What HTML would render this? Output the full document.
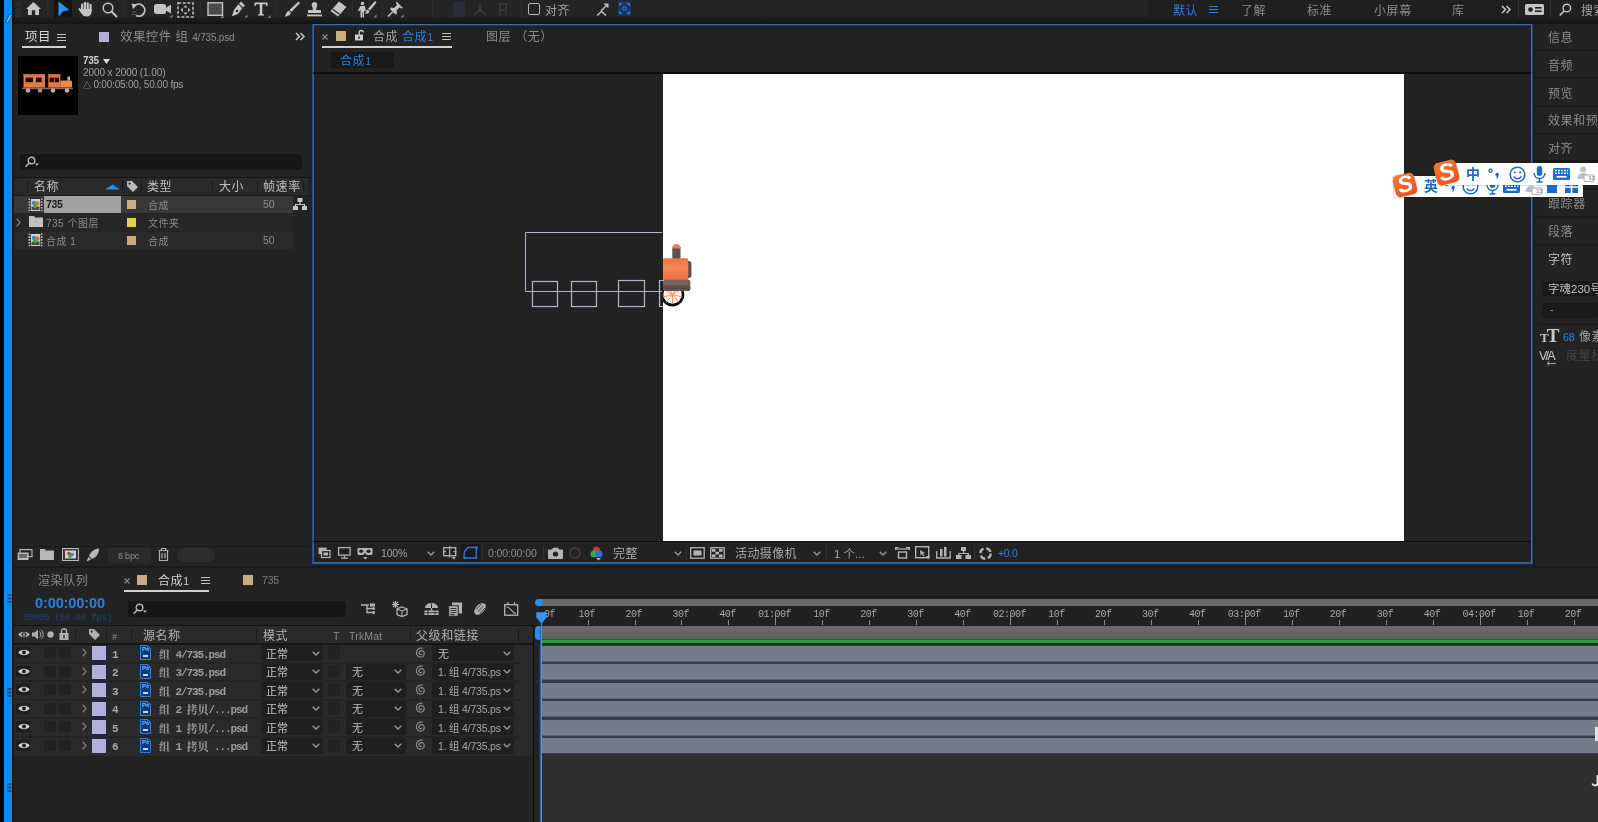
<!DOCTYPE html>
<html lang="zh-CN">
<head>
<meta charset="utf-8">
<title>After Effects</title>
<style>
*{box-sizing:border-box;margin:0;padding:0}
html,body{width:1598px;height:822px;overflow:hidden;background:#232323}
body{position:relative;font-family:"Liberation Sans","Noto Sans CJK SC",sans-serif;font-size:12px;color:#a0a0a0}
.a{position:absolute}
.t{position:absolute;white-space:nowrap;line-height:14px;height:14px}
.c{letter-spacing:.6px;margin-top:1px}
.s{font-size:10px}
.ser{font-family:"Liberation Serif","Noto Serif CJK SC",serif;font-weight:bold}
svg{position:absolute;overflow:visible}
.mono{font-family:"Liberation Mono","Noto Serif CJK SC",monospace;font-weight:bold;font-size:11px}
.ml{letter-spacing:-1.100px}
.mc{position:relative;top:.500px}
</style>
</head>
<body>
<div id="root" style="position:absolute;left:0;top:0;width:1598px;height:822px;will-change:transform">
<div class="a" style="left:0px;top:0px;width:4px;height:822px;background:#030303;"></div>
<div class="a" style="left:4px;top:0px;width:8px;height:822px;background:#0a8cf0;"></div>
<div class="a" style="left:12px;top:0px;width:2px;height:822px;background:#1a1a1a;"></div>
<svg style="left:5px;top:14px" width="7" height="9" viewBox="0 0 7 9"><path d="M5.500 1.500L2.500 7.500" stroke="#0a5aa8" stroke-width="3.500" stroke-linecap="round"/><path d="M5.500 1.500L2.500 7.500" stroke="#8ccaf8" stroke-width="1.600" stroke-linecap="round"/></svg>
<div class="a" style="left:14px;top:0px;width:1584px;height:17px;background:#242424;"></div>
<div class="a" style="left:14px;top:17px;width:1584px;height:7px;background:linear-gradient(#202020,#131313);"></div>
<div class="a" style="left:16px;top:2px;width:5px;height:1px;background:#303030;"></div>
<div class="a" style="left:16px;top:4px;width:5px;height:1px;background:#303030;"></div>
<div class="a" style="left:16px;top:6px;width:5px;height:1px;background:#303030;"></div>
<div class="a" style="left:16px;top:8px;width:5px;height:1px;background:#303030;"></div>
<div class="a" style="left:16px;top:10px;width:5px;height:1px;background:#303030;"></div>
<div class="a" style="left:16px;top:12px;width:5px;height:1px;background:#303030;"></div>
<div class="a" style="left:16px;top:14px;width:5px;height:1px;background:#303030;"></div>
<div class="a" style="left:16px;top:16px;width:5px;height:1px;background:#303030;"></div>
<svg style="left:26px;top:2px" width="15" height="13" viewBox="0 0 15 13"><path d="M7.5 0L0 7h2v6h3.8V8.2h3.4V13H13V7h2z" fill="#c4c4c4"/></svg>
<div class="a" style="left:47px;top:1px;width:1px;height:17px;background:#2e2e2e;"></div>
<div class="a" style="left:54px;top:0px;width:18px;height:18px;background:#141414;"></div>
<svg style="left:58px;top:1px" width="12" height="17" viewBox="0 0 12 17"><path d="M0.5 0.5L11.5 9L5.2 10.2L0.5 16z" fill="#3090f0"/></svg>
<svg style="left:78px;top:1px" width="16" height="16" viewBox="0 0 16 16"><rect x="3" y="2.500" width="2.200" height="8" rx="1.100" fill="#c4c4c4"/><rect x="5.800" y="0.800" width="2.200" height="9" rx="1.100" fill="#c4c4c4"/><rect x="8.600" y="1.200" width="2.200" height="9" rx="1.100" fill="#c4c4c4"/><rect x="11.400" y="2.800" width="2.200" height="8" rx="1.100" fill="#c4c4c4"/><path d="M3 8h10.600v2.500c0 3.200-2 5-5 5-2.200 0-3.700-.8-4.800-2.500L0.600 8.600a1.100 1.100 0 0 1 1.800-1.200L3 8.500z" fill="#c4c4c4"/></svg>
<svg style="left:102px;top:2px" width="16" height="15" viewBox="0 0 16 15"><circle cx="6" cy="6" r="4.8" fill="none" stroke="#c4c4c4" stroke-width="1.5"/><path d="M9.5 9.500L15 15" stroke="#c4c4c4" stroke-width="2"/></svg>
<div class="a" style="left:124px;top:1px;width:1px;height:17px;background:#2e2e2e;"></div>
<svg style="left:131px;top:2px" width="17" height="15" viewBox="0 0 17 15"><path d="M4 3.500A6 6 0 1 1 5 13.500" fill="none" stroke="#c4c4c4" stroke-width="1.800"/><path d="M0.5 1.500L6.500 2.500L2 7z" fill="#c4c4c4"/><path d="M1 10h4M0.5 12.500h5" stroke="#555" stroke-width="1"/></svg>
<svg style="left:154px;top:3px" width="19" height="15" viewBox="0 0 19 15"><rect x="0" y="1" width="12" height="10" rx="2.500" fill="#c4c4c4"/><path d="M11 5.500L17 1.500V10.500L11 7z" fill="#c4c4c4"/><path d="M15.500 14.500h3v-3z" fill="#888"/></svg>
<svg style="left:177px;top:2px" width="17" height="16" viewBox="0 0 17 16"><rect x="1" y="1" width="15" height="14" fill="none" stroke="#c4c4c4" stroke-width="1.500" stroke-dasharray="3 1.700"/><path d="M8.500 3.200l2 2.300h-4zM8.500 12.800l2-2.300h-4zM3.500 8l2.300-2v4zM13.500 8l-2.300-2v4z" fill="#c4c4c4"/></svg>
<div class="a" style="left:200px;top:1px;width:1px;height:17px;background:#2e2e2e;"></div>
<svg style="left:207px;top:2px" width="17" height="16" viewBox="0 0 17 16"><rect x="1" y="0.800" width="14.500" height="12.500" fill="#4a4a4a" stroke="#c4c4c4" stroke-width="1.400"/><path d="M13.500 16h3v-3z" fill="#888"/></svg>
<svg style="left:231px;top:1px" width="17" height="17" viewBox="0 0 17 17"><path d="M10 0.500l4 4-2 2-4-4zM7.300 3.300l3.900 3.900L7 13 0.800 15.200 3 9z" fill="#c4c4c4"/><circle cx="6" cy="10" r="1.200" fill="#242424"/><path d="M13.500 16.500h3v-3z" fill="#888"/></svg>
<svg style="left:254px;top:2px" width="17" height="16" viewBox="0 0 17 16"><path d="M0.500 0.500h13v3.500h-1.200l-.5-1.800H8.300V12l1.800.5V13.500H3.900V12.500L5.700 12V2.200H2.200L1.700 4H0.500z" fill="#c4c4c4"/><path d="M13.500 16h3v-3z" fill="#888"/></svg>
<div class="a" style="left:276px;top:1px;width:1px;height:17px;background:#2e2e2e;"></div>
<svg style="left:284px;top:1px" width="16" height="17" viewBox="0 0 16 17"><path d="M14.500 0.500L16 2 7.500 11 5.500 9z" fill="#c4c4c4"/><path d="M4.800 9.800l2 2c-.5 2.500-3 3.700-6.300 3.700 1.800-1.200 1.300-4.700 4.300-5.700z" fill="#c4c4c4"/></svg>
<svg style="left:306px;top:2px" width="17" height="15" viewBox="0 0 17 15"><path d="M8.500 0a2.800 2.800 0 0 1 2.300 4.500L10 8h5v3H2V8h5L6.200 4.500A2.800 2.800 0 0 1 8.500 0z" fill="#c4c4c4"/><rect x="1" y="12.500" width="15" height="1.800" fill="#c4c4c4"/></svg>
<svg style="left:330px;top:1px" width="17" height="16" viewBox="0 0 17 16"><path d="M9 0.500L16.500 6 8 15.500 0.500 10z" fill="#c4c4c4"/><path d="M2.800 8.300L9.500 13.300" stroke="#242424" stroke-width="1.300"/></svg>
<div class="a" style="left:352px;top:1px;width:1px;height:17px;background:#2e2e2e;"></div>
<svg style="left:358px;top:1px" width="19" height="17" viewBox="0 0 19 17"><circle cx="4.500" cy="2.500" r="1.800" fill="#c4c4c4"/><path d="M2.500 5h4.500l1 5-1.500.5-.5-2v8H4.500V11H4v5.500H2.500V8.500L1 10.500 0 9.500z" fill="#c4c4c4"/><path d="M17 0l1.500 1.500L12 9.500 10 7.800z" fill="#c4c4c4"/><path d="M9.500 8.500l2 1.800c-.7 2-2.500 2.700-4.500 2.500 1-1 1-3.300 2.500-4.300z" fill="#c4c4c4"/><path d="M15.500 16.500h3v-3z" fill="#888"/></svg>
<div class="a" style="left:382px;top:1px;width:1px;height:17px;background:#2e2e2e;"></div>
<svg style="left:387px;top:1px" width="17" height="17" viewBox="0 0 17 17"><path d="M9.500 0.500L16 7l-1.500.5-2-1L9.500 9.500l.5 3-1.500 1L3 8l1-1.500 3 .5 3-3-1-2z" fill="#c4c4c4"/><path d="M5.500 11L1 15.500" stroke="#c4c4c4" stroke-width="1.600"/><path d="M13.500 16.500h3v-3z" fill="#888"/></svg>
<div class="a" style="left:432px;top:1px;width:1px;height:17px;background:#2e2e2e;"></div>
<svg style="left:452px;top:2px" width="14" height="15" viewBox="0 0 14 15"><rect x="1" y="0" width="12" height="15" fill="#2a2e3a"/></svg>
<svg style="left:473px;top:3px" width="14" height="13" viewBox="0 0 14 13"><path d="M7 0v7M7 7L1 12M7 7l6 5" stroke="#3c3c3c" stroke-width="1.500" fill="none"/></svg>
<svg style="left:497px;top:2px" width="12" height="15" viewBox="0 0 12 15"><path d="M1 2h10M3 2v12M9 2v12M3 8h6" stroke="#3a3a3a" stroke-width="1.500" fill="none"/></svg>
<div class="a" style="left:521px;top:1px;width:1px;height:17px;background:#303030;"></div>
<div class="a" style="left:528px;top:3px;width:12px;height:12px;border:1.500px solid #b4b4b4;border-radius:2px"></div>
<div class="t c" style="left:545px;top:3px;color:#a0a0a0;font-size:12px">对齐</div>
<svg style="left:596px;top:3px" width="13" height="13" viewBox="0 0 13 13"><path d="M11.500 1.500L5 8" stroke="#c4c4c4" stroke-width="1.400"/><path d="M7.500 0.500h5v5z" fill="#c4c4c4"/><path d="M1 12.500L5.500 8.500 10 12.500" fill="none" stroke="#c4c4c4" stroke-width="1.500"/></svg>
<svg style="left:618px;top:1px" width="13" height="15" viewBox="0 0 13 15"><rect x="0" y="0" width="13" height="15" fill="#16345e"/><path d="M1.700 5V2.700H4M9 2.700h2.300V5M11.300 10v2.300H9M4 12.300H1.700V10" fill="none" stroke="#3a78c8" stroke-width="1.400"/><rect x="5" y="6" width="3" height="3" fill="none" stroke="#3a78c8" stroke-width="1"/></svg>
<div class="a" style="left:1148px;top:0px;width:450px;height:17px;background:#1f1f1f;"></div>
<div class="t c" style="left:1173px;top:3px;color:#2d80dc;font-size:12px">默认</div>
<svg style="left:1209px;top:6px" width="9" height="8" viewBox="0 0 9 8"><path d="M0 0.500H9M0 3.500H9M0 6.500H9" stroke="#2d80dc" stroke-width="1" shape-rendering="crispEdges"/></svg>
<div class="t c" style="left:1241px;top:3px;color:#8c8c8c;font-size:12px">了解</div>
<div class="t c" style="left:1307px;top:3px;color:#8c8c8c;font-size:12px">标准</div>
<div class="t c" style="left:1374px;top:3px;color:#8c8c8c;font-size:12px">小屏幕</div>
<div class="t c" style="left:1452px;top:3px;color:#8c8c8c;font-size:12px">库</div>
<svg style="left:1501px;top:5px" width="10" height="9" viewBox="0 0 10 9"><path d="M1 1L4.500 4.500L1 8M5.500 1L9 4.500L5.500 8" fill="none" stroke="#c8c8c8" stroke-width="1.500"/></svg>
<div class="a" style="left:1518px;top:1px;width:1px;height:17px;background:#303030;"></div>
<svg style="left:1525px;top:4px" width="19" height="11" viewBox="0 0 19 11"><rect x="0" y="0" width="19" height="11" rx="1.500" fill="#c4c4c4"/><circle cx="5.500" cy="5.500" r="2.300" fill="#1f1f1f"/><rect x="10" y="3" width="6.500" height="1.600" fill="#1f1f1f"/><rect x="10" y="6.400" width="6.500" height="1.600" fill="#1f1f1f"/></svg>
<div class="a" style="left:1550px;top:1px;width:1px;height:17px;background:#303030;"></div>
<svg style="left:1559px;top:3px" width="13" height="13" viewBox="0 0 13 13"><circle cx="7.800" cy="5" r="3.800" fill="none" stroke="#c4c4c4" stroke-width="1.400"/><path d="M5 8L0.800 12.300" stroke="#c4c4c4" stroke-width="1.700"/></svg>
<div class="t c" style="left:1581px;top:3px;color:#a0a0a0;font-size:12px">搜索</div>
<div class="a" style="left:14px;top:24px;width:297px;height:542px;background:#232323;"></div>
<div class="t c" style="left:25px;top:29px;color:#d4d4d4;font-size:12.5px">项目</div>
<svg style="left:57px;top:34px" width="9" height="8" viewBox="0 0 9 8"><path d="M0 0.500H9M0 3.500H9M0 6.500H9" stroke="#c0c0c0" stroke-width="1" shape-rendering="crispEdges"/></svg>
<div class="a" style="left:22px;top:46px;width:44px;height:2px;background:#d0d0d0;"></div>
<div class="a" style="left:99px;top:32px;width:10px;height:10px;background:#b4b0d8;"></div>
<div class="t c" style="left:120px;top:29px;color:#8c8c8c;font-size:12.5px;letter-spacing:.4px">效果控件 组 <span style="font-size:10px;letter-spacing:-.2px">4/735.psd</span></div>
<svg style="left:295px;top:32px" width="10" height="9" viewBox="0 0 10 9"><path d="M1 1L4.5 4.5L1 8M5.5 1L9 4.5L5.5 8" fill="none" stroke="#c8c8c8" stroke-width="1.5"/></svg>
<div class="a" style="left:18px;top:56px;width:60px;height:59px;background:#000000;"></div>
<svg style="left:18px;top:56px" width="60" height="60" viewBox="0 0 60 60">
<rect x="5.500" y="18" width="21.500" height="13.600" fill="#e87a40"/><rect x="5.500" y="18" width="21.500" height="1.500" fill="#c86838"/><rect x="7.600" y="21.600" width="7.400" height="4.600" fill="#1c0c06"/><rect x="17.900" y="21.600" width="5.800" height="4.600" fill="#1c0c06"/>
<rect x="30.300" y="18" width="12" height="13.600" fill="#e87a40"/><rect x="30.300" y="18" width="12" height="1.500" fill="#c86838"/><rect x="31.600" y="21.600" width="9.400" height="4.600" fill="#1c0c06"/><rect x="36" y="21.600" width="1" height="4.600" fill="#a85830"/>
<rect x="42.300" y="24.500" width="11.700" height="7.100" rx="1" fill="#f08a50"/><rect x="49.500" y="20.500" width="2.500" height="4" fill="#d8a890"/>
<rect x="4" y="31.600" width="51" height="1.600" fill="#8a6a5a"/>
<circle cx="10" cy="34.500" r="2.300" fill="#c8a8a0"/><circle cx="22" cy="34.500" r="2.300" fill="#a88880"/><circle cx="35" cy="34.500" r="2.300" fill="#c8a8a0"/><circle cx="49" cy="34.500" r="2.300" fill="#c8a8a0"/>
</svg>
<div class="t s" style="left:83px;top:54px;color:#d0d0d0;font-weight:bold;letter-spacing:-.3px">735</div>
<svg style="left:103px;top:59px" width="7" height="5" viewBox="0 0 7 5"><path d="M0 0H7L3.5 5Z" fill="#e0e0e0"/></svg>
<div class="t s" style="left:83px;top:66px;color:#a0a0a0;letter-spacing:-.08px">2000 x 2000 (1.00)</div>
<div class="t s" style="left:83px;top:78px;color:#a0a0a0;letter-spacing:-.2px"><span style="font-size:8px">△</span> 0:00:05:00, 50.00 fps</div>
<div class="a" style="left:20px;top:154px;width:282px;height:16px;background:#161616;border-radius:3px"></div>
<svg style="left:24px;top:156px" width="16" height="12" viewBox="0 0 16 12"><circle cx="7.5" cy="4.5" r="3.3" fill="none" stroke="#b8b8b8" stroke-width="1.4"/><path d="M5 7.2L1.5 10.8" stroke="#b8b8b8" stroke-width="1.6"/><path d="M11 7.5h4l-2 2.3z" fill="#b8b8b8"/></svg>
<div class="a" style="left:14px;top:177px;width:297px;height:1px;background:#161616;"></div>
<div class="a" style="left:14px;top:178px;width:294px;height:17px;background:#2a2a2a;"></div>
<div class="a" style="left:14px;top:195px;width:297px;height:1px;background:#1a1a1a;"></div>
<div class="t c" style="left:34px;top:179px;color:#c0c0c0;font-size:12px">名称</div>
<svg style="left:105px;top:184px" width="15" height="6" viewBox="0 0 15 6"><path d="M0 5.500L7.500 0.500L15 5.500Z" fill="#2d8ceb"/></svg>
<svg style="left:126px;top:180px" width="13" height="13" viewBox="0 0 13 13"><path d="M1 1h5l6 6-5 5-6-6z" fill="#b8b8b8"/><circle cx="3.6" cy="3.6" r="1.1" fill="#2a2a2a"/></svg>
<div class="t c" style="left:147px;top:179px;color:#c0c0c0;font-size:12px">类型</div>
<div class="t c" style="left:219px;top:179px;color:#c0c0c0;font-size:12px">大小</div>
<div class="t c" style="left:263px;top:179px;color:#c0c0c0;font-size:12px">帧速率</div>
<div class="a" style="left:27px;top:181px;width:1px;height:12px;background:#1a1a1a;"></div>
<div class="a" style="left:122px;top:181px;width:1px;height:12px;background:#1a1a1a;"></div>
<div class="a" style="left:141px;top:181px;width:1px;height:12px;background:#1a1a1a;"></div>
<div class="a" style="left:212px;top:181px;width:1px;height:12px;background:#1a1a1a;"></div>
<div class="a" style="left:257px;top:181px;width:1px;height:12px;background:#1a1a1a;"></div>
<div class="a" style="left:303px;top:181px;width:1px;height:12px;background:#1a1a1a;"></div>
<div class="a" style="left:14px;top:196px;width:279px;height:17px;background:#383838;"></div>
<svg style="left:28px;top:198px" width="15" height="14" viewBox="0 0 15 14"><rect x="0" y="0" width="15" height="14" fill="#2a2a2a"/><path d="M1.200 0.500v13M13.800 0.500v13" stroke="#e0e0e0" stroke-width="1.200" stroke-dasharray="1.600 1.200"/><rect x="2.800" y="1" width="9.400" height="12" fill="#d4d4d4"/><rect x="3.500" y="8.500" width="8" height="3.500" fill="#4a4a4a"/><circle cx="6" cy="5" r="2.200" fill="#3a88c0"/><circle cx="9.300" cy="5.500" r="2.300" fill="#e07040"/><circle cx="7" cy="8" r="2" fill="#58a050"/></svg>
<div class="a" style="left:44px;top:196px;width:77px;height:17px;background:#a2a2a2;"></div>
<div class="t s" style="left:46px;top:197px;color:#1a1a1a;font-weight:bold;letter-spacing:-.3px;font-size:10.5px">735</div>
<div class="a" style="left:127px;top:200px;width:9px;height:9px;background:#c8ac80;"></div>
<div class="t c" style="left:148px;top:198px;color:#8c8c8c;font-size:10px;letter-spacing:.5px">合成</div>
<div class="t s" style="left:263px;top:197px;color:#8c8c8c;font-size:10.5px">50</div>
<svg style="left:293px;top:198px" width="14" height="12" viewBox="0 0 14 12"><rect x="4.5" y="0" width="5" height="4" fill="#c8c8c8"/><rect x="0" y="8" width="5" height="4" fill="#c8c8c8"/><rect x="9" y="8" width="5" height="4" fill="#c8c8c8"/><path d="M7 4v2.5M2.5 8V6.5h9V8" fill="none" stroke="#c8c8c8" stroke-width="1.2"/></svg>
<div class="a" style="left:14px;top:214px;width:279px;height:17px;background:#262626;"></div>
<svg style="left:16px;top:218px" width="5" height="9" viewBox="0 0 5 9"><path d="M0.7 0.7 L4 4.5 L0.7 8.3" fill="none" stroke="#7a7a7a" stroke-width="1.3"/></svg>
<svg style="left:29px;top:216px" width="14" height="11" viewBox="0 0 14 11"><path d="M0 0h5l1 1.5h8V11H0z" fill="#c0c0c0"/></svg>
<div class="t c" style="left:46px;top:216px;color:#8c8c8c;font-size:10px;letter-spacing:.5px">735 个图层</div>
<div class="a" style="left:127px;top:218px;width:9px;height:9px;background:#e8d040;"></div>
<div class="t c" style="left:148px;top:216px;color:#8c8c8c;font-size:10px;letter-spacing:.5px">文件夹</div>
<div class="a" style="left:14px;top:232px;width:279px;height:17px;background:#2a2a2a;"></div>
<svg style="left:28px;top:233px" width="15" height="14" viewBox="0 0 15 14"><rect x="0" y="0" width="15" height="14" fill="#2a2a2a"/><path d="M1.200 0.500v13M13.800 0.500v13" stroke="#e0e0e0" stroke-width="1.200" stroke-dasharray="1.600 1.200"/><rect x="2.800" y="1" width="9.400" height="12" fill="#d4d4d4"/><rect x="3.500" y="8.500" width="8" height="3.500" fill="#4a4a4a"/><circle cx="6" cy="5" r="2.200" fill="#3a88c0"/><circle cx="9.300" cy="5.500" r="2.300" fill="#e07040"/><circle cx="7" cy="8" r="2" fill="#58a050"/></svg>
<div class="t c" style="left:46px;top:234px;color:#8c8c8c;font-size:10px;letter-spacing:.5px">合成 1</div>
<div class="a" style="left:127px;top:236px;width:9px;height:9px;background:#c8ac80;"></div>
<div class="t c" style="left:148px;top:234px;color:#8c8c8c;font-size:10px;letter-spacing:.5px">合成</div>
<div class="t s" style="left:263px;top:233px;color:#8c8c8c;font-size:10.5px">50</div>
<div class="a" style="left:14px;top:546px;width:297px;height:1px;background:#1a1a1a;"></div>
<svg style="left:17px;top:549px" width="16" height="12" viewBox="0 0 16 12"><rect x="3" y="0.6" width="12" height="7" fill="none" stroke="#b8b8b8" stroke-width="1.2"/><rect x="0.6" y="3.5" width="11" height="7.5" fill="#b8b8b8"/><path d="M2 6h8M2 8h8" stroke="#232323" stroke-width="1"/></svg>
<svg style="left:40px;top:549px" width="14" height="11" viewBox="0 0 14 11"><path d="M0 0h5l1 1.5h8V11H0z" fill="#b8b8b8"/></svg>
<svg style="left:62px;top:548px" width="17" height="13" viewBox="0 0 17 13"><rect x="0.5" y="0.5" width="16" height="12" fill="#3a3a3a" stroke="#b8b8b8"/><rect x="3" y="2.5" width="11" height="8" fill="#d0d0d0"/><circle cx="7" cy="5.5" r="1.8" fill="#c04030"/><circle cx="10" cy="6.5" r="1.8" fill="#3a78c8"/><circle cx="8" cy="8.5" r="1.8" fill="#58a848"/></svg>
<svg style="left:86px;top:548px" width="14" height="14" viewBox="0 0 14 14"><path d="M13 0.5C8 1 4.5 4 3 8l3 3c4-1.5 7-5 7-10.5zM2.5 9L0.5 13.5 5 11.5z" fill="#b8b8b8"/></svg>
<div class="a" style="left:108px;top:548px;width:43px;height:15px;background:#2b2b2b;border-radius:2px"></div>
<div class="t s" style="left:118px;top:549px;color:#8c8c8c;font-size:9px;letter-spacing:-.2px">8 bpc</div>
<svg style="left:158px;top:548px" width="11" height="13" viewBox="0 0 11 13"><path d="M0.5 2.5h10M3.5 2.5v-2h4v2M1.5 2.5v10h8v-10M4 5v5.5M7 5v5.5" fill="none" stroke="#b0b0b0" stroke-width="1.2"/></svg>
<div class="a" style="left:177px;top:548px;width:38px;height:14px;background:#2e2e2e;border-radius:7px"></div>
<div class="a" style="left:311px;top:24px;width:1222px;height:541px;background:#14263c"></div>
<div class="a" style="left:312px;top:24px;width:1221px;height:540px;background:#222222;border:2px solid #325f96"></div>
<div class="a" style="left:312px;top:24px;width:1221px;height:1px;background:#3a6ea6;"></div>
<div class="a" style="left:314px;top:25px;width:1217px;height:1px;background:#1c3654;"></div>
<div class="a" style="left:312px;top:24px;width:1px;height:540px;background:#2a4f7c;"></div>
<div class="a" style="left:1531px;top:25px;width:1px;height:538px;background:#4576b0;"></div>
<div class="a" style="left:1532px;top:24px;width:1px;height:540px;background:#22426a;"></div>
<svg style="left:322px;top:34px" width="6" height="6" viewBox="0 0 6 6"><path d="M0.500 0.500L5.500 5.500M5.500 0.500L0.500 5.500" stroke="#8a8a8a" stroke-width="1.100"/></svg>
<div class="a" style="left:336px;top:31px;width:10px;height:10px;background:#c8ac80;"></div>
<svg style="left:355px;top:30px" width="9" height="11" viewBox="0 0 9 11"><rect x="0" y="4.500" width="8" height="6" fill="#d0d0d0"/><path d="M4.300 4.500V2.500a2 2 0 0 1 4 0" fill="none" stroke="#d0d0d0" stroke-width="1.300"/><rect x="3.300" y="6.500" width="1.500" height="2.200" fill="#222"/></svg>
<div class="t c" style="left:373px;top:29px;color:#a8a8a8;font-size:12px">合成</div>
<div class="t c" style="left:402px;top:29px;color:#2d80dc;font-size:12px">合成<span style="font-size:10.500px;letter-spacing:0">1</span></div>
<svg style="left:442px;top:33px" width="9" height="8" viewBox="0 0 9 8"><path d="M0 0.500H9M0 3.500H9M0 6.500H9" stroke="#c0c0c0" stroke-width="1" shape-rendering="crispEdges"/></svg>
<div class="a" style="left:322px;top:46px;width:130px;height:2px;background:#d0d0d0;"></div>
<div class="t c" style="left:486px;top:29px;color:#8c8c8c;font-size:12px">图层 （无）</div>
<div class="a" style="left:331px;top:52px;width:63px;height:16px;background:#181818;border-radius:2px"></div>
<div class="t c" style="left:340px;top:53px;color:#2d80dc;font-size:12px">合成<span style="font-size:10.500px;letter-spacing:0">1</span></div>
<div class="a" style="left:313px;top:72px;width:1218px;height:2px;background:#0c0c0c;"></div>
<div class="a" style="left:313px;top:541px;width:1218px;height:1px;background:#0c0c0c;"></div>
<div class="a" style="left:663px;top:74px;width:741px;height:467px;background:#ffffff;"></div>
<svg style="left:520px;top:225px" width="180" height="90" viewBox="520 225 180 90">
<path d="M662 232.500H525.500V291.500H662" fill="none" stroke="#b4b4cc" stroke-width="1"/>
<rect x="532.500" y="281.500" width="25" height="25" fill="none" stroke="#b4b4cc" stroke-width="1.200"/>
<rect x="571.500" y="281.500" width="25" height="25" fill="none" stroke="#b4b4cc" stroke-width="1.200"/>
<rect x="618.500" y="280.500" width="26" height="26" fill="none" stroke="#b4b4cc" stroke-width="1.200"/>
<path d="M663 280.500H659.500V306.500H663" fill="none" stroke="#b4b4cc" stroke-width="1.200"/>
<defs><linearGradient id="tg" x1="0" y1="0" x2="0" y2="1"><stop offset="0" stop-color="#ee7040"/><stop offset="0.450" stop-color="#f58a5a"/><stop offset="1" stop-color="#ea6a3a"/></linearGradient></defs>
<clipPath id="cv"><rect x="663" y="74" width="741" height="467"/></clipPath>
<g clip-path="url(#cv)">
<circle cx="672.500" cy="294.600" r="10.500" fill="#fff4ee" stroke="#0a0a0a" stroke-width="2.600"/>
<path d="M672.500 294.600L662.500 297M672.500 294.600L663.500 289M672.500 294.600L667.500 285.500M672.500 294.600L672.500 304M672.500 294.600L677.500 285.500M672.500 294.600L681.500 289M672.500 294.600L682.500 297M672.500 294.600L666 302.500M672.500 294.600L679 302.500" stroke="#f29068" stroke-width="1"/>
<rect x="672.300" y="247" width="8.200" height="12" fill="#5e5048"/>
<path d="M672.300 248.500a4.100 4.500 0 0 1 8.200 0z" fill="#f27c52"/>
<rect x="686" y="261" width="5.400" height="17" rx="2.700" fill="#5e4a42"/>
<rect x="663" y="258.200" width="25.300" height="22" rx="1.500" fill="url(#tg)"/>
<rect x="663" y="279.800" width="27.300" height="11" rx="2" fill="#76605a"/>
<rect x="663" y="285.500" width="27.300" height="5.300" rx="2" fill="#5c4c44"/>
</g>
</svg>
<svg style="left:318px;top:547px" width="13" height="12" viewBox="0 0 13 12"><rect x="0.600" y="0.600" width="8" height="6.500" fill="#b4b4b4"/><rect x="3.500" y="3.500" width="8.500" height="7" fill="#222" stroke="#b4b4b4" stroke-width="1.200"/><rect x="5.500" y="5.500" width="4.500" height="3" fill="#b4b4b4"/></svg>
<svg style="left:338px;top:547px" width="13" height="12" viewBox="0 0 13 12"><rect x="0.600" y="0.600" width="11.500" height="7.500" fill="none" stroke="#b4b4b4" stroke-width="1.300"/><path d="M6.500 8.500v2.500M3 11.200h7" stroke="#b4b4b4" stroke-width="1.300"/></svg>
<svg style="left:357px;top:547px" width="16" height="13" viewBox="0 0 16 13"><path d="M1 1h13.500a1 1 0 0 1 1 1v4.500a1.500 1.500 0 0 1-1.500 1.500H10L8 6 6 8H2A1.500 1.500 0 0 1 0.500 6.500V2a1 1 0 0 1 .5-1z" fill="#b4b4b4"/><ellipse cx="4.200" cy="4.300" rx="2" ry="1.700" fill="#222"/><ellipse cx="11.500" cy="4.300" rx="2" ry="1.700" fill="#222"/><path d="M6 10h4.500l-2.200 2.500z" fill="#b4b4b4"/></svg>
<div class="t s" style="left:381px;top:546px;color:#a0a0a0;font-size:10.500px;letter-spacing:-.2px">100%</div>
<svg style="left:427px;top:551px" width="8" height="5" viewBox="0 0 8 5"><path d="M0.7 0.7 L4 4 L7.3 0.7" fill="none" stroke="#9a9a9a" stroke-width="1.3"/></svg>
<svg style="left:443px;top:546px" width="14" height="14" viewBox="0 0 14 14"><rect x="0.700" y="1.700" width="12" height="8" fill="none" stroke="#b4b4b4" stroke-width="1.300"/><path d="M6.700 0v11.500M0 5.700h3M10.500 5.700h3" stroke="#b4b4b4" stroke-width="1.200"/><path d="M8.500 11h4.500l-2.200 2.500z" fill="#b4b4b4"/></svg>
<div class="a" style="left:461px;top:544px;width:19px;height:17px;background:#1a1a1a;"></div>
<svg style="left:463px;top:546px" width="15" height="14" viewBox="0 0 15 14"><path d="M1.500 5.500L5 1.500H13.500L13 12H1z" fill="none" stroke="#2a78d8" stroke-width="1.400"/><circle cx="1.500" cy="12" r="1.300" fill="#2a78d8"/><circle cx="13" cy="12" r="1.300" fill="#2a78d8"/><circle cx="13.500" cy="1.500" r="1.300" fill="#2a78d8"/></svg>
<div class="a" style="left:482px;top:545px;width:1px;height:15px;background:#303030;"></div>
<div class="t s" style="left:488px;top:546px;color:#8c8c8c;font-size:10.500px;letter-spacing:-.1px">0:00:00:00</div>
<div class="a" style="left:543px;top:545px;width:1px;height:15px;background:#303030;"></div>
<svg style="left:548px;top:547px" width="15" height="12" viewBox="0 0 15 12"><path d="M1 2.500h3l1-1.800h5l1 1.800h3a1 1 0 0 1 1 1V11a1 1 0 0 1-1 1H1a1 1 0 0 1-1-1V3.500a1 1 0 0 1 1-1z" fill="#b4b4b4"/><circle cx="7.500" cy="7" r="2.600" fill="#222"/></svg>
<svg style="left:568px;top:547px" width="14" height="12" viewBox="0 0 14 12"><circle cx="7" cy="6" r="5" fill="none" stroke="#3a3a3a" stroke-width="2"/></svg>
<svg style="left:590px;top:546px" width="13" height="15" viewBox="0 0 13 15"><circle cx="6.500" cy="4" r="3.500" fill="#d03838"/><circle cx="4" cy="8" r="3.500" fill="#38a848"/><circle cx="9" cy="8" r="3.500" fill="#3868d8"/><path d="M6 12h5l-2.500 2.600z" fill="#b4b4b4"/></svg>
<div class="t c" style="left:613px;top:546px;color:#b0b0b0;font-size:12px">完整</div>
<svg style="left:674px;top:551px" width="8" height="5" viewBox="0 0 8 5"><path d="M0.7 0.7 L4 4 L7.3 0.7" fill="none" stroke="#9a9a9a" stroke-width="1.3"/></svg>
<div class="a" style="left:686px;top:545px;width:1px;height:15px;background:#303030;"></div>
<svg style="left:690px;top:547px" width="15" height="12" viewBox="0 0 15 12"><rect x="0.700" y="0.700" width="13.500" height="10.500" fill="none" stroke="#b4b4b4" stroke-width="1.300"/><rect x="3.500" y="3.500" width="8" height="5" fill="#b4b4b4"/></svg>
<svg style="left:710px;top:547px" width="15" height="12" viewBox="0 0 15 12"><rect x="0.700" y="0.700" width="13.500" height="10.500" fill="none" stroke="#b4b4b4" stroke-width="1.300"/><path d="M2 2h3.500v2.800H2zM9 2h3.500v2.800H9zM5.500 4.800H9v2.600H5.500zM2 7.400h3.500V10H2zM9 7.400h3.500V10H9z" fill="#b4b4b4"/></svg>
<div class="t c" style="left:735px;top:546px;color:#a8a8a8;font-size:12px;letter-spacing:.4px">活动摄像机</div>
<svg style="left:813px;top:551px" width="8" height="5" viewBox="0 0 8 5"><path d="M0.7 0.7 L4 4 L7.3 0.7" fill="none" stroke="#9a9a9a" stroke-width="1.3"/></svg>
<div class="a" style="left:826px;top:545px;width:1px;height:15px;background:#303030;"></div>
<div class="t c" style="left:834px;top:546px;color:#a8a8a8;font-size:11.500px;letter-spacing:0">1 个...</div>
<svg style="left:879px;top:551px" width="8" height="5" viewBox="0 0 8 5"><path d="M0.7 0.7 L4 4 L7.3 0.7" fill="none" stroke="#9a9a9a" stroke-width="1.3"/></svg>
<svg style="left:895px;top:547px" width="15" height="12" viewBox="0 0 15 12"><path d="M0.700 3V0.700H3.500M11 0.700h3.300V3" fill="none" stroke="#b4b4b4" stroke-width="1.300"/><path d="M0 2h15" stroke="#b4b4b4" stroke-width="1.200"/><rect x="3.500" y="5" width="8" height="6" fill="none" stroke="#b4b4b4" stroke-width="1.400"/></svg>
<svg style="left:915px;top:546px" width="16" height="14" viewBox="0 0 16 14"><rect x="0.700" y="0.700" width="13" height="11" fill="none" stroke="#b4b4b4" stroke-width="1.400"/><path d="M5 4l5 3-2 .5 1.500 2.500-1 .6L7 8 5.500 9.500z" fill="#b4b4b4"/><path d="M11 10h4.500l-2.200 3z" fill="#b4b4b4"/></svg>
<svg style="left:936px;top:547px" width="15" height="12" viewBox="0 0 15 12"><path d="M0.700 4v7h13.500V4" fill="none" stroke="#b4b4b4" stroke-width="1.300"/><rect x="4" y="2" width="2.500" height="7.500" fill="#b4b4b4"/><rect x="8" y="0" width="2.500" height="9.500" fill="#b4b4b4"/></svg>
<svg style="left:956px;top:547px" width="15" height="12" viewBox="0 0 15 12"><rect x="5" y="0" width="5" height="4" fill="#b4b4b4"/><rect x="0" y="8" width="5.500" height="4" fill="#b4b4b4"/><rect x="9.500" y="8" width="5.500" height="4" fill="#b4b4b4"/><path d="M7.500 4v2.500M2.700 8V6.500h9.600V8" fill="none" stroke="#b4b4b4" stroke-width="1.200"/></svg>
<div class="a" style="left:974px;top:545px;width:1px;height:15px;background:#303030;"></div>
<svg style="left:979px;top:547px" width="14" height="13" viewBox="0 0 14 13"><circle cx="6.500" cy="6.500" r="5.200" fill="none" stroke="#b4b4b4" stroke-width="2.400" stroke-dasharray="5.500 2.700"/></svg>
<div class="t s" style="left:998px;top:546px;color:#2d80dc;font-size:10.500px;letter-spacing:-.3px">+0.0</div>
<div class="a" style="left:1533px;top:24px;width:2px;height:542px;background:#1c1c1c;"></div>
<div class="a" style="left:1535px;top:24px;width:63px;height:542px;background:#232323;"></div>
<div class="t c" style="left:1548px;top:30px;color:#8c8c8c;font-size:12px;width:50px;overflow:hidden">信息</div>
<div class="a" style="left:1535px;top:49px;width:63px;height:2px;background:#191919;"></div>
<div class="a" style="left:1535px;top:51px;width:63px;height:1px;background:#1f1f1f;"></div>
<div class="t c" style="left:1548px;top:58px;color:#8c8c8c;font-size:12px;width:50px;overflow:hidden">音频</div>
<div class="a" style="left:1535px;top:77px;width:63px;height:2px;background:#191919;"></div>
<div class="a" style="left:1535px;top:79px;width:63px;height:1px;background:#1f1f1f;"></div>
<div class="t c" style="left:1548px;top:86px;color:#8c8c8c;font-size:12px;width:50px;overflow:hidden">预览</div>
<div class="a" style="left:1535px;top:105px;width:63px;height:2px;background:#191919;"></div>
<div class="a" style="left:1535px;top:107px;width:63px;height:1px;background:#1f1f1f;"></div>
<div class="t c" style="left:1548px;top:113px;color:#8c8c8c;font-size:12px;width:50px;overflow:hidden">效果和预设</div>
<div class="a" style="left:1535px;top:133px;width:63px;height:2px;background:#191919;"></div>
<div class="a" style="left:1535px;top:135px;width:63px;height:1px;background:#1f1f1f;"></div>
<div class="t c" style="left:1548px;top:141px;color:#8c8c8c;font-size:12px;width:50px;overflow:hidden">对齐</div>
<div class="a" style="left:1535px;top:160px;width:63px;height:2px;background:#191919;"></div>
<div class="a" style="left:1535px;top:162px;width:63px;height:1px;background:#1f1f1f;"></div>
<div class="t c" style="left:1548px;top:169px;color:#8c8c8c;font-size:12px;width:50px;overflow:hidden">库</div>
<div class="a" style="left:1535px;top:188px;width:63px;height:2px;background:#191919;"></div>
<div class="a" style="left:1535px;top:190px;width:63px;height:1px;background:#1f1f1f;"></div>
<div class="t c" style="left:1548px;top:196px;color:#8c8c8c;font-size:12px;width:50px;overflow:hidden">跟踪器</div>
<div class="a" style="left:1535px;top:216px;width:63px;height:2px;background:#191919;"></div>
<div class="a" style="left:1535px;top:218px;width:63px;height:1px;background:#1f1f1f;"></div>
<div class="t c" style="left:1548px;top:224px;color:#8c8c8c;font-size:12px;width:50px;overflow:hidden">段落</div>
<div class="a" style="left:1535px;top:244px;width:63px;height:2px;background:#191919;"></div>
<div class="a" style="left:1535px;top:246px;width:63px;height:1px;background:#1f1f1f;"></div>
<div class="t c" style="left:1548px;top:252px;color:#c4c4c4;font-size:12px;width:50px;overflow:hidden">字符</div>
<div class="a" style="left:1542px;top:281px;width:56px;height:15px;background:#1a1a1a;border-radius:2px"></div>
<div class="t" style="left:1548px;top:282px;color:#c0c0c0;font-size:11.500px;width:50px;overflow:hidden">字魂230号</div>
<div class="a" style="left:1542px;top:303px;width:56px;height:15px;background:#1a1a1a;border-radius:2px"></div>
<div class="t s" style="left:1550px;top:303px;color:#a0a0a0">-</div>
<div class="a" style="left:1538px;top:324px;width:60px;height:1px;background:#1a1a1a;"></div>
<div class="t" style="left:1540px;top:326px;height:20px;line-height:20px;color:#c8c8c8;font-family:'Liberation Serif',serif;font-weight:bold;font-size:13px;letter-spacing:-2px">T<span style="font-size:19px">T</span></div>
<div class="t s" style="left:1563px;top:330px;color:#2d80dc;font-size:10.500px">68</div>
<div class="t c" style="left:1579px;top:329px;color:#a0a0a0;font-size:12px;width:19px;overflow:hidden">像素</div>
<div class="t" style="left:1539px;top:349px;color:#c8c8c8;font-size:12.500px;letter-spacing:-1.800px">V/A</div>
<svg style="left:1547px;top:361px" width="9" height="5" viewBox="0 0 9 5"><path d="M0 2.500h9M0 2.500l2.500-2M0 2.500l2.500 2" stroke="#a0a0a0" stroke-width="1" fill="none"/></svg>
<div class="t c" style="left:1566px;top:348px;color:#444444;font-size:12px;width:32px;overflow:hidden">度量标准</div>
<div class="a" style="left:14px;top:566px;width:1584px;height:2px;background:#1a1a1a;"></div>
<div class="a" style="left:14px;top:568px;width:1584px;height:254px;background:#232323;"></div>
<svg style="left:7px;top:594px" width="5" height="9" viewBox="0 0 5 9"><path d="M0.500 1h4M0.500 4.500h4M0.500 8h4" stroke="#10386a" stroke-width="1.300"/></svg>
<svg style="left:7px;top:688px" width="5" height="9" viewBox="0 0 5 9"><path d="M0.500 1h4M0.500 4.500h4M0.500 8h4" stroke="#10386a" stroke-width="1.300"/></svg>
<svg style="left:7px;top:783px" width="5" height="9" viewBox="0 0 5 9"><path d="M0.500 1h4M0.500 4.500h4M0.500 8h4" stroke="#10386a" stroke-width="1.300"/></svg>
<div class="t c" style="left:38px;top:573px;color:#8c8c8c;font-size:12px">渲染队列</div>
<svg style="left:124px;top:578px" width="6" height="6" viewBox="0 0 6 6"><path d="M0.500 0.500L5.500 5.500M5.500 0.500L0.500 5.500" stroke="#8a8a8a" stroke-width="1.100"/></svg>
<div class="a" style="left:137px;top:575px;width:10px;height:10px;background:#c8ac80;"></div>
<div class="t c" style="left:158px;top:573px;color:#d0d0d0;font-size:12px">合成<span style="font-size:10.500px;letter-spacing:0">1</span></div>
<svg style="left:201px;top:577px" width="9" height="8" viewBox="0 0 9 8"><path d="M0 0.500H9M0 3.500H9M0 6.500H9" stroke="#c0c0c0" stroke-width="1" shape-rendering="crispEdges"/></svg>
<div class="a" style="left:124px;top:590px;width:85px;height:2px;background:#d0d0d0;"></div>
<div class="a" style="left:243px;top:575px;width:10px;height:10px;background:#c8ac80;"></div>
<div class="t s" style="left:262px;top:573px;color:#7c7c7c;font-size:10.500px;letter-spacing:-.2px">735</div>
<div class="t " style="left:35px;top:596px;color:#2d80dc;font-size:14.500px;font-weight:bold;letter-spacing:-.1px">0:00:00:00</div>
<div class="t " style="left:23px;top:611px;color:#1b437a;font-family:'Liberation Mono',monospace;font-size:9px;letter-spacing:-.15px">00000 (50.00 fps)</div>
<div class="a" style="left:128px;top:601px;width:218px;height:16px;background:#161616;border-radius:3px"></div>
<svg style="left:132px;top:603px" width="16" height="12" viewBox="0 0 16 12"><circle cx="7.500" cy="4.500" r="3.300" fill="none" stroke="#b8b8b8" stroke-width="1.400"/><path d="M5 7.200L1.500 10.800" stroke="#b8b8b8" stroke-width="1.600"/><path d="M11 7.500h4l-2 2.300z" fill="#b8b8b8"/></svg>
<svg style="left:361px;top:603px" width="16" height="12" viewBox="0 0 16 12"><path d="M0 2h8M6 2v7.500h5M6 5.500h5" fill="none" stroke="#b4b4b4" stroke-width="1.300"/><rect x="9" y="0.500" width="5" height="3" fill="#b4b4b4"/><circle cx="12.500" cy="5.500" r="1.500" fill="#b4b4b4"/><circle cx="12.500" cy="9.500" r="1.500" fill="#b4b4b4"/></svg>
<svg style="left:392px;top:601px" width="16" height="16" viewBox="0 0 16 16"><path d="M3.500 0v7M0 3.500h7M1 1l5 5M6 1L1 6" stroke="#b4b4b4" stroke-width="1.100"/><path d="M10 6l5 2v5.500l-5 2-5-2V8z" fill="none" stroke="#b4b4b4" stroke-width="1.300"/><path d="M5 8l5 2 5-2M10 10v5.500" fill="none" stroke="#b4b4b4" stroke-width="1.100"/></svg>
<svg style="left:424px;top:603px" width="15" height="13" viewBox="0 0 15 13"><path d="M1 5a6.500 5 0 0 1 13 0z" fill="#b4b4b4"/><path d="M7.500 0.500V12" stroke="#232323" stroke-width="1"/><path d="M7.500 5v4" stroke="#b4b4b4" stroke-width="1.300"/><rect x="0.500" y="7.500" width="14" height="4.500" fill="#b4b4b4"/><path d="M0.500 9.700h14M4 7.500v4.500M11 7.500v4.500" stroke="#232323" stroke-width=".8"/></svg>
<svg style="left:448px;top:602px" width="15" height="15" viewBox="0 0 15 15"><rect x="4" y="0.500" width="10" height="11" fill="#b4b4b4"/><rect x="0.700" y="3.700" width="9.500" height="10.500" fill="#b4b4b4" stroke="#232323" stroke-width="1"/><path d="M2.500 6.500h6M2.500 8.500h6M2.500 10.500h6M2.500 12.500h4" stroke="#232323" stroke-width=".9"/></svg>
<svg style="left:473px;top:602px" width="14" height="14" viewBox="0 0 14 14"><ellipse cx="7" cy="7" rx="7" ry="4.300" transform="rotate(-45 7 7)" fill="#b4b4b4"/><path d="M3 7.500L8.500 2M5 9.500L10.500 4M7 11.500L12 6" stroke="#232323" stroke-width=".9"/></svg>
<svg style="left:504px;top:602px" width="15" height="14" viewBox="0 0 15 14"><rect x="0.700" y="2.700" width="13" height="10.500" fill="none" stroke="#b4b4b4" stroke-width="1.300"/><path d="M4 0v3M10.500 0v3" stroke="#b4b4b4" stroke-width="1.300"/><path d="M2.500 5c5 0 5 6.500 9.500 6.500" fill="none" stroke="#b4b4b4" stroke-width="1.100"/></svg>
<div class="a" style="left:14px;top:625px;width:520px;height:1px;background:#141414;"></div>
<div class="a" style="left:14px;top:626px;width:520px;height:17px;background:#2a2a2a;"></div>
<div class="a" style="left:14px;top:643px;width:520px;height:2px;background:#161616;"></div>
<svg style="left:18px;top:630px" width="12" height="9" viewBox="0 0 12 9"><path d="M0.300 4.500C2.500 0.800 9.500 0.800 11.700 4.500 9.500 8.200 2.500 8.200 0.300 4.500z" fill="#b0b0b0"/><circle cx="6" cy="4.500" r="2.300" fill="#2a2a2a"/><circle cx="6" cy="4.500" r="1.100" fill="#b0b0b0"/></svg>
<svg style="left:32px;top:629px" width="11" height="11" viewBox="0 0 11 11"><path d="M0 3.500h2.500L6 0.500v10L2.500 7.500H0z" fill="#b0b0b0"/><path d="M7.500 2.500a4 4 0 0 1 0 6M9 0.800a6 6 0 0 1 0 9.400" fill="none" stroke="#b0b0b0" stroke-width="1"/></svg>
<svg style="left:47px;top:631px" width="7" height="7" viewBox="0 0 7 7"><circle cx="3.500" cy="3.500" r="3.200" fill="#b0b0b0"/></svg>
<svg style="left:59px;top:628px" width="10" height="12" viewBox="0 0 10 12"><rect x="0.500" y="5" width="9" height="7" fill="#b0b0b0"/><path d="M2.500 5V3.200a2.500 2.500 0 0 1 5 0V5" fill="none" stroke="#b0b0b0" stroke-width="1.400"/><rect x="4.200" y="7" width="1.600" height="3" fill="#2a2a2a"/></svg>
<div class="a" style="left:75px;top:629px;width:1px;height:12px;background:#1a1a1a;"></div>
<svg style="left:88px;top:628px" width="13" height="13" viewBox="0 0 13 13"><path d="M1 1h5l6 6-5 5-6-6z" fill="#b0b0b0"/><circle cx="3.600" cy="3.600" r="1.100" fill="#2a2a2a"/></svg>
<div class="a" style="left:106px;top:629px;width:1px;height:12px;background:#1a1a1a;"></div>
<div class="t s" style="left:112px;top:630px;color:#8c8c8c;font-size:9px;font-style:italic">#</div>
<div class="a" style="left:131px;top:629px;width:1px;height:12px;background:#1a1a1a;"></div>
<div class="t c" style="left:143px;top:628px;color:#b0b0b0;font-size:12px">源名称</div>
<div class="a" style="left:256px;top:629px;width:1px;height:12px;background:#1a1a1a;"></div>
<div class="t c" style="left:263px;top:628px;color:#b0b0b0;font-size:12px">模式</div>
<div class="t s" style="left:333px;top:629px;color:#8c8c8c;font-size:10.500px">T</div>
<div class="t s" style="left:349px;top:629px;color:#8c8c8c;font-size:10.500px;letter-spacing:.2px">TrkMat</div>
<div class="a" style="left:410px;top:629px;width:1px;height:12px;background:#1a1a1a;"></div>
<div class="t c" style="left:416px;top:628px;color:#b0b0b0;font-size:12px">父级和链接</div>
<div class="a" style="left:518px;top:629px;width:1px;height:12px;background:#1a1a1a;"></div>
<div class="a" style="left:14px;top:645px;width:520px;height:111px;background:#2a2a2a;"></div>
<div class="a" style="left:16px;top:647px;width:14px;height:11px;background:#1e1e1e;border-radius:2px"></div>
<svg style="left:18px;top:648px" width="12" height="9" viewBox="0 0 12 9"><path d="M0.300 4.500C2.500 0.800 9.500 0.800 11.700 4.500 9.500 8.200 2.500 8.200 0.300 4.500z" fill="#d0d0d0"/><circle cx="6" cy="4.500" r="1.900" fill="#1e1e1e"/></svg>
<div class="a" style="left:44px;top:647px;width:12px;height:11px;background:#222222;"></div>
<div class="a" style="left:59px;top:647px;width:12px;height:11px;background:#222222;"></div>
<svg style="left:82px;top:648px" width="5" height="9" viewBox="0 0 5 9"><path d="M0.7 0.7 L4 4.5 L0.7 8.3" fill="none" stroke="#7a7a7a" stroke-width="1.3"/></svg>
<div class="a" style="left:91px;top:645px;width:16px;height:17px;background:#24263a;"></div>
<div class="a" style="left:92px;top:646px;width:14px;height:14px;background:#b2b0dc;"></div>
<div class="t mono" style="left:112px;top:648px;color:#a8a8a8"><span class="ml">1</span></div>
<svg style="left:140px;top:645px" width="11" height="15" viewBox="0 0 11 15"><path d="M0.500 0.500h7l3 3v11h-10z" fill="#0c3a78" stroke="#2d80dc" stroke-width="1"/><path d="M7.500 0.500v3h3" fill="none" stroke="#2d80dc" stroke-width=".8"/></svg>
<div class="t" style="left:142px;top:646px;color:#7ab8ff;font-size:6px;font-weight:bold;line-height:7px;height:7px;letter-spacing:-.3px">Ps</div>
<div class="a" style="left:143px;top:655px;width:5px;height:2px;background:#c8d8f0;"></div>
<div class="t mono" style="left:159px;top:648px;color:#9c9c9c"><span class="mc">组</span><span class="ml"> 4/735.psd</span></div>
<div class="a" style="left:261px;top:645px;width:62px;height:16px;background:#1f1f1f;border-radius:2px"></div>
<div class="t " style="left:266px;top:647px;color:#c0c0c0;font-size:11px">正常</div>
<svg style="left:312px;top:651px" width="8" height="5" viewBox="0 0 8 5"><path d="M0.7 0.7 L4 4 L7.3 0.7" fill="none" stroke="#9a9a9a" stroke-width="1.3"/></svg>
<div class="a" style="left:328px;top:646px;width:12px;height:13px;background:#232323;"></div>
<svg style="left:415px;top:647px" width="12" height="12" viewBox="0 0 12 12"><path d="M6.73 6.73 L6.67 6.90 L6.58 7.07 L6.44 7.23 L6.27 7.36 L6.07 7.46 L5.83 7.53 L5.58 7.55 L5.31 7.52 L5.04 7.43 L4.79 7.29 L4.55 7.10 L4.34 6.86 L4.18 6.57 L4.07 6.24 L4.02 5.89 L4.04 5.52 L4.13 5.15 L4.29 4.78 L4.52 4.45 L4.82 4.15 L5.17 3.90 L5.58 3.72 L6.03 3.61 L6.50 3.59 L6.98 3.65 L7.45 3.80 L7.90 4.04 L8.31 4.37 L8.67 4.77 L8.95 5.24 L9.14 5.77 L9.24 6.34 L9.24 6.92 L9.13 7.51 L8.91 8.09 L8.58 8.62 L8.15 9.10 L7.64 9.50 L7.05 9.81 L6.40 10.01 L5.71 10.10 L5.01 10.05 L4.31 9.89 L3.64 9.59 L3.03 9.17 L2.49 8.64 L2.05 8.01 L1.72 7.30 L1.52 6.53 L1.46 5.72 L1.54 4.91 L1.78 4.10 L2.16 3.35 L2.67 2.66 L3.31 2.06 L4.06 1.58 L4.89 1.24 L5.78 1.05 L6.71 1.02 L7.64 1.16" fill="none" stroke="#8c8c8c" stroke-width="1.200"/></svg>
<div class="a" style="left:432px;top:645px;width:82px;height:16px;background:#1f1f1f;border-radius:2px"></div>
<div class="t " style="left:438px;top:647px;color:#c0c0c0;font-size:11px">无</div>
<svg style="left:503px;top:651px" width="8" height="5" viewBox="0 0 8 5"><path d="M0.7 0.7 L4 4 L7.3 0.7" fill="none" stroke="#9a9a9a" stroke-width="1.3"/></svg>
<div class="a" style="left:14px;top:662px;width:520px;height:2px;background:#242424;"></div>
<div class="a" style="left:16px;top:666px;width:14px;height:11px;background:#1e1e1e;border-radius:2px"></div>
<svg style="left:18px;top:667px" width="12" height="9" viewBox="0 0 12 9"><path d="M0.300 4.500C2.500 0.800 9.500 0.800 11.700 4.500 9.500 8.200 2.500 8.200 0.300 4.500z" fill="#d0d0d0"/><circle cx="6" cy="4.500" r="1.900" fill="#1e1e1e"/></svg>
<div class="a" style="left:44px;top:666px;width:12px;height:11px;background:#222222;"></div>
<div class="a" style="left:59px;top:666px;width:12px;height:11px;background:#222222;"></div>
<svg style="left:82px;top:667px" width="5" height="9" viewBox="0 0 5 9"><path d="M0.7 0.7 L4 4.5 L0.7 8.3" fill="none" stroke="#7a7a7a" stroke-width="1.3"/></svg>
<div class="a" style="left:91px;top:662px;width:16px;height:19px;background:#24263a;"></div>
<div class="a" style="left:92px;top:665px;width:14px;height:14px;background:#b2b0dc;"></div>
<div class="t mono" style="left:112px;top:666px;color:#a8a8a8"><span class="ml">2</span></div>
<svg style="left:140px;top:664px" width="11" height="15" viewBox="0 0 11 15"><path d="M0.500 0.500h7l3 3v11h-10z" fill="#0c3a78" stroke="#2d80dc" stroke-width="1"/><path d="M7.500 0.500v3h3" fill="none" stroke="#2d80dc" stroke-width=".8"/></svg>
<div class="t" style="left:142px;top:665px;color:#7ab8ff;font-size:6px;font-weight:bold;line-height:7px;height:7px;letter-spacing:-.3px">Ps</div>
<div class="a" style="left:143px;top:674px;width:5px;height:2px;background:#c8d8f0;"></div>
<div class="t mono" style="left:159px;top:666px;color:#9c9c9c"><span class="mc">组</span><span class="ml"> 3/735.psd</span></div>
<div class="a" style="left:261px;top:664px;width:62px;height:16px;background:#1f1f1f;border-radius:2px"></div>
<div class="t " style="left:266px;top:665px;color:#c0c0c0;font-size:11px">正常</div>
<svg style="left:312px;top:669px" width="8" height="5" viewBox="0 0 8 5"><path d="M0.7 0.7 L4 4 L7.3 0.7" fill="none" stroke="#9a9a9a" stroke-width="1.3"/></svg>
<div class="a" style="left:328px;top:665px;width:12px;height:13px;background:#232323;"></div>
<div class="a" style="left:346px;top:664px;width:60px;height:16px;background:#1f1f1f;border-radius:2px"></div>
<div class="t " style="left:352px;top:665px;color:#c0c0c0;font-size:11px">无</div>
<svg style="left:394px;top:669px" width="8" height="5" viewBox="0 0 8 5"><path d="M0.7 0.7 L4 4 L7.3 0.7" fill="none" stroke="#9a9a9a" stroke-width="1.3"/></svg>
<svg style="left:415px;top:665px" width="12" height="12" viewBox="0 0 12 12"><path d="M6.73 6.73 L6.67 6.90 L6.58 7.07 L6.44 7.23 L6.27 7.36 L6.07 7.46 L5.83 7.53 L5.58 7.55 L5.31 7.52 L5.04 7.43 L4.79 7.29 L4.55 7.10 L4.34 6.86 L4.18 6.57 L4.07 6.24 L4.02 5.89 L4.04 5.52 L4.13 5.15 L4.29 4.78 L4.52 4.45 L4.82 4.15 L5.17 3.90 L5.58 3.72 L6.03 3.61 L6.50 3.59 L6.98 3.65 L7.45 3.80 L7.90 4.04 L8.31 4.37 L8.67 4.77 L8.95 5.24 L9.14 5.77 L9.24 6.34 L9.24 6.92 L9.13 7.51 L8.91 8.09 L8.58 8.62 L8.15 9.10 L7.64 9.50 L7.05 9.81 L6.40 10.01 L5.71 10.10 L5.01 10.05 L4.31 9.89 L3.64 9.59 L3.03 9.17 L2.49 8.64 L2.05 8.01 L1.72 7.30 L1.52 6.53 L1.46 5.72 L1.54 4.91 L1.78 4.10 L2.16 3.35 L2.67 2.66 L3.31 2.06 L4.06 1.58 L4.89 1.24 L5.78 1.05 L6.71 1.02 L7.64 1.16" fill="none" stroke="#8c8c8c" stroke-width="1.200"/></svg>
<div class="a" style="left:432px;top:664px;width:82px;height:16px;background:#1f1f1f;border-radius:2px"></div>
<div class="t" style="left:438px;top:665px;color:#a8a8a8;font-size:10.500px;width:63px;overflow:hidden;letter-spacing:-.2px">1. 组 4/735.psd</div>
<svg style="left:503px;top:669px" width="8" height="5" viewBox="0 0 8 5"><path d="M0.7 0.7 L4 4 L7.3 0.7" fill="none" stroke="#9a9a9a" stroke-width="1.3"/></svg>
<div class="a" style="left:14px;top:680px;width:520px;height:2px;background:#242424;"></div>
<div class="a" style="left:16px;top:684px;width:14px;height:11px;background:#1e1e1e;border-radius:2px"></div>
<svg style="left:18px;top:685px" width="12" height="9" viewBox="0 0 12 9"><path d="M0.300 4.500C2.500 0.800 9.500 0.800 11.700 4.500 9.500 8.200 2.500 8.200 0.300 4.500z" fill="#d0d0d0"/><circle cx="6" cy="4.500" r="1.900" fill="#1e1e1e"/></svg>
<div class="a" style="left:44px;top:684px;width:12px;height:11px;background:#222222;"></div>
<div class="a" style="left:59px;top:684px;width:12px;height:11px;background:#222222;"></div>
<svg style="left:82px;top:685px" width="5" height="9" viewBox="0 0 5 9"><path d="M0.7 0.7 L4 4.5 L0.7 8.3" fill="none" stroke="#7a7a7a" stroke-width="1.3"/></svg>
<div class="a" style="left:91px;top:680px;width:16px;height:19px;background:#24263a;"></div>
<div class="a" style="left:92px;top:683px;width:14px;height:14px;background:#b2b0dc;"></div>
<div class="t mono" style="left:112px;top:685px;color:#a8a8a8"><span class="ml">3</span></div>
<svg style="left:140px;top:682px" width="11" height="15" viewBox="0 0 11 15"><path d="M0.500 0.500h7l3 3v11h-10z" fill="#0c3a78" stroke="#2d80dc" stroke-width="1"/><path d="M7.500 0.500v3h3" fill="none" stroke="#2d80dc" stroke-width=".8"/></svg>
<div class="t" style="left:142px;top:683px;color:#7ab8ff;font-size:6px;font-weight:bold;line-height:7px;height:7px;letter-spacing:-.3px">Ps</div>
<div class="a" style="left:143px;top:692px;width:5px;height:2px;background:#c8d8f0;"></div>
<div class="t mono" style="left:159px;top:685px;color:#9c9c9c"><span class="mc">组</span><span class="ml"> 2/735.psd</span></div>
<div class="a" style="left:261px;top:682px;width:62px;height:16px;background:#1f1f1f;border-radius:2px"></div>
<div class="t " style="left:266px;top:684px;color:#c0c0c0;font-size:11px">正常</div>
<svg style="left:312px;top:688px" width="8" height="5" viewBox="0 0 8 5"><path d="M0.7 0.7 L4 4 L7.3 0.7" fill="none" stroke="#9a9a9a" stroke-width="1.3"/></svg>
<div class="a" style="left:328px;top:683px;width:12px;height:13px;background:#232323;"></div>
<div class="a" style="left:346px;top:682px;width:60px;height:16px;background:#1f1f1f;border-radius:2px"></div>
<div class="t " style="left:352px;top:684px;color:#c0c0c0;font-size:11px">无</div>
<svg style="left:394px;top:688px" width="8" height="5" viewBox="0 0 8 5"><path d="M0.7 0.7 L4 4 L7.3 0.7" fill="none" stroke="#9a9a9a" stroke-width="1.3"/></svg>
<svg style="left:415px;top:684px" width="12" height="12" viewBox="0 0 12 12"><path d="M6.73 6.73 L6.67 6.90 L6.58 7.07 L6.44 7.23 L6.27 7.36 L6.07 7.46 L5.83 7.53 L5.58 7.55 L5.31 7.52 L5.04 7.43 L4.79 7.29 L4.55 7.10 L4.34 6.86 L4.18 6.57 L4.07 6.24 L4.02 5.89 L4.04 5.52 L4.13 5.15 L4.29 4.78 L4.52 4.45 L4.82 4.15 L5.17 3.90 L5.58 3.72 L6.03 3.61 L6.50 3.59 L6.98 3.65 L7.45 3.80 L7.90 4.04 L8.31 4.37 L8.67 4.77 L8.95 5.24 L9.14 5.77 L9.24 6.34 L9.24 6.92 L9.13 7.51 L8.91 8.09 L8.58 8.62 L8.15 9.10 L7.64 9.50 L7.05 9.81 L6.40 10.01 L5.71 10.10 L5.01 10.05 L4.31 9.89 L3.64 9.59 L3.03 9.17 L2.49 8.64 L2.05 8.01 L1.72 7.30 L1.52 6.53 L1.46 5.72 L1.54 4.91 L1.78 4.10 L2.16 3.35 L2.67 2.66 L3.31 2.06 L4.06 1.58 L4.89 1.24 L5.78 1.05 L6.71 1.02 L7.64 1.16" fill="none" stroke="#8c8c8c" stroke-width="1.200"/></svg>
<div class="a" style="left:432px;top:682px;width:82px;height:16px;background:#1f1f1f;border-radius:2px"></div>
<div class="t" style="left:438px;top:684px;color:#a8a8a8;font-size:10.500px;width:63px;overflow:hidden;letter-spacing:-.2px">1. 组 4/735.psd</div>
<svg style="left:503px;top:688px" width="8" height="5" viewBox="0 0 8 5"><path d="M0.7 0.7 L4 4 L7.3 0.7" fill="none" stroke="#9a9a9a" stroke-width="1.3"/></svg>
<div class="a" style="left:14px;top:699px;width:520px;height:2px;background:#242424;"></div>
<div class="a" style="left:16px;top:703px;width:14px;height:11px;background:#1e1e1e;border-radius:2px"></div>
<svg style="left:18px;top:704px" width="12" height="9" viewBox="0 0 12 9"><path d="M0.300 4.500C2.500 0.800 9.500 0.800 11.700 4.500 9.500 8.200 2.500 8.200 0.300 4.500z" fill="#d0d0d0"/><circle cx="6" cy="4.500" r="1.900" fill="#1e1e1e"/></svg>
<div class="a" style="left:44px;top:703px;width:12px;height:11px;background:#222222;"></div>
<div class="a" style="left:59px;top:703px;width:12px;height:11px;background:#222222;"></div>
<svg style="left:82px;top:704px" width="5" height="9" viewBox="0 0 5 9"><path d="M0.7 0.7 L4 4.5 L0.7 8.3" fill="none" stroke="#7a7a7a" stroke-width="1.3"/></svg>
<div class="a" style="left:91px;top:699px;width:16px;height:19px;background:#24263a;"></div>
<div class="a" style="left:92px;top:702px;width:14px;height:14px;background:#b2b0dc;"></div>
<div class="t mono" style="left:112px;top:703px;color:#a8a8a8"><span class="ml">4</span></div>
<svg style="left:140px;top:701px" width="11" height="15" viewBox="0 0 11 15"><path d="M0.500 0.500h7l3 3v11h-10z" fill="#0c3a78" stroke="#2d80dc" stroke-width="1"/><path d="M7.500 0.500v3h3" fill="none" stroke="#2d80dc" stroke-width=".8"/></svg>
<div class="t" style="left:142px;top:702px;color:#7ab8ff;font-size:6px;font-weight:bold;line-height:7px;height:7px;letter-spacing:-.3px">Ps</div>
<div class="a" style="left:143px;top:711px;width:5px;height:2px;background:#c8d8f0;"></div>
<div class="t mono" style="left:159px;top:703px;color:#9c9c9c"><span class="mc">组</span><span class="ml"> 2 </span><span class="mc">拷贝</span><span class="ml">/...psd</span></div>
<div class="a" style="left:261px;top:701px;width:62px;height:16px;background:#1f1f1f;border-radius:2px"></div>
<div class="t " style="left:266px;top:702px;color:#c0c0c0;font-size:11px">正常</div>
<svg style="left:312px;top:706px" width="8" height="5" viewBox="0 0 8 5"><path d="M0.7 0.7 L4 4 L7.3 0.7" fill="none" stroke="#9a9a9a" stroke-width="1.3"/></svg>
<div class="a" style="left:328px;top:702px;width:12px;height:13px;background:#232323;"></div>
<div class="a" style="left:346px;top:701px;width:60px;height:16px;background:#1f1f1f;border-radius:2px"></div>
<div class="t " style="left:352px;top:702px;color:#c0c0c0;font-size:11px">无</div>
<svg style="left:394px;top:706px" width="8" height="5" viewBox="0 0 8 5"><path d="M0.7 0.7 L4 4 L7.3 0.7" fill="none" stroke="#9a9a9a" stroke-width="1.3"/></svg>
<svg style="left:415px;top:702px" width="12" height="12" viewBox="0 0 12 12"><path d="M6.73 6.73 L6.67 6.90 L6.58 7.07 L6.44 7.23 L6.27 7.36 L6.07 7.46 L5.83 7.53 L5.58 7.55 L5.31 7.52 L5.04 7.43 L4.79 7.29 L4.55 7.10 L4.34 6.86 L4.18 6.57 L4.07 6.24 L4.02 5.89 L4.04 5.52 L4.13 5.15 L4.29 4.78 L4.52 4.45 L4.82 4.15 L5.17 3.90 L5.58 3.72 L6.03 3.61 L6.50 3.59 L6.98 3.65 L7.45 3.80 L7.90 4.04 L8.31 4.37 L8.67 4.77 L8.95 5.24 L9.14 5.77 L9.24 6.34 L9.24 6.92 L9.13 7.51 L8.91 8.09 L8.58 8.62 L8.15 9.10 L7.64 9.50 L7.05 9.81 L6.40 10.01 L5.71 10.10 L5.01 10.05 L4.31 9.89 L3.64 9.59 L3.03 9.17 L2.49 8.64 L2.05 8.01 L1.72 7.30 L1.52 6.53 L1.46 5.72 L1.54 4.91 L1.78 4.10 L2.16 3.35 L2.67 2.66 L3.31 2.06 L4.06 1.58 L4.89 1.24 L5.78 1.05 L6.71 1.02 L7.64 1.16" fill="none" stroke="#8c8c8c" stroke-width="1.200"/></svg>
<div class="a" style="left:432px;top:701px;width:82px;height:16px;background:#1f1f1f;border-radius:2px"></div>
<div class="t" style="left:438px;top:702px;color:#a8a8a8;font-size:10.500px;width:63px;overflow:hidden;letter-spacing:-.2px">1. 组 4/735.psd</div>
<svg style="left:503px;top:706px" width="8" height="5" viewBox="0 0 8 5"><path d="M0.7 0.7 L4 4 L7.3 0.7" fill="none" stroke="#9a9a9a" stroke-width="1.3"/></svg>
<div class="a" style="left:14px;top:717px;width:520px;height:2px;background:#242424;"></div>
<div class="a" style="left:16px;top:721px;width:14px;height:11px;background:#1e1e1e;border-radius:2px"></div>
<svg style="left:18px;top:722px" width="12" height="9" viewBox="0 0 12 9"><path d="M0.300 4.500C2.500 0.800 9.500 0.800 11.700 4.500 9.500 8.200 2.500 8.200 0.300 4.500z" fill="#d0d0d0"/><circle cx="6" cy="4.500" r="1.900" fill="#1e1e1e"/></svg>
<div class="a" style="left:44px;top:721px;width:12px;height:11px;background:#222222;"></div>
<div class="a" style="left:59px;top:721px;width:12px;height:11px;background:#222222;"></div>
<svg style="left:82px;top:722px" width="5" height="9" viewBox="0 0 5 9"><path d="M0.7 0.7 L4 4.5 L0.7 8.3" fill="none" stroke="#7a7a7a" stroke-width="1.3"/></svg>
<div class="a" style="left:91px;top:717px;width:16px;height:19px;background:#24263a;"></div>
<div class="a" style="left:92px;top:720px;width:14px;height:14px;background:#b2b0dc;"></div>
<div class="t mono" style="left:112px;top:722px;color:#a8a8a8"><span class="ml">5</span></div>
<svg style="left:140px;top:719px" width="11" height="15" viewBox="0 0 11 15"><path d="M0.500 0.500h7l3 3v11h-10z" fill="#0c3a78" stroke="#2d80dc" stroke-width="1"/><path d="M7.500 0.500v3h3" fill="none" stroke="#2d80dc" stroke-width=".8"/></svg>
<div class="t" style="left:142px;top:720px;color:#7ab8ff;font-size:6px;font-weight:bold;line-height:7px;height:7px;letter-spacing:-.3px">Ps</div>
<div class="a" style="left:143px;top:729px;width:5px;height:2px;background:#c8d8f0;"></div>
<div class="t mono" style="left:159px;top:722px;color:#9c9c9c"><span class="mc">组</span><span class="ml"> 1 </span><span class="mc">拷贝</span><span class="ml">/...psd</span></div>
<div class="a" style="left:261px;top:719px;width:62px;height:16px;background:#1f1f1f;border-radius:2px"></div>
<div class="t " style="left:266px;top:721px;color:#c0c0c0;font-size:11px">正常</div>
<svg style="left:312px;top:725px" width="8" height="5" viewBox="0 0 8 5"><path d="M0.7 0.7 L4 4 L7.3 0.7" fill="none" stroke="#9a9a9a" stroke-width="1.3"/></svg>
<div class="a" style="left:328px;top:720px;width:12px;height:13px;background:#232323;"></div>
<div class="a" style="left:346px;top:719px;width:60px;height:16px;background:#1f1f1f;border-radius:2px"></div>
<div class="t " style="left:352px;top:721px;color:#c0c0c0;font-size:11px">无</div>
<svg style="left:394px;top:725px" width="8" height="5" viewBox="0 0 8 5"><path d="M0.7 0.7 L4 4 L7.3 0.7" fill="none" stroke="#9a9a9a" stroke-width="1.3"/></svg>
<svg style="left:415px;top:721px" width="12" height="12" viewBox="0 0 12 12"><path d="M6.73 6.73 L6.67 6.90 L6.58 7.07 L6.44 7.23 L6.27 7.36 L6.07 7.46 L5.83 7.53 L5.58 7.55 L5.31 7.52 L5.04 7.43 L4.79 7.29 L4.55 7.10 L4.34 6.86 L4.18 6.57 L4.07 6.24 L4.02 5.89 L4.04 5.52 L4.13 5.15 L4.29 4.78 L4.52 4.45 L4.82 4.15 L5.17 3.90 L5.58 3.72 L6.03 3.61 L6.50 3.59 L6.98 3.65 L7.45 3.80 L7.90 4.04 L8.31 4.37 L8.67 4.77 L8.95 5.24 L9.14 5.77 L9.24 6.34 L9.24 6.92 L9.13 7.51 L8.91 8.09 L8.58 8.62 L8.15 9.10 L7.64 9.50 L7.05 9.81 L6.40 10.01 L5.71 10.10 L5.01 10.05 L4.31 9.89 L3.64 9.59 L3.03 9.17 L2.49 8.64 L2.05 8.01 L1.72 7.30 L1.52 6.53 L1.46 5.72 L1.54 4.91 L1.78 4.10 L2.16 3.35 L2.67 2.66 L3.31 2.06 L4.06 1.58 L4.89 1.24 L5.78 1.05 L6.71 1.02 L7.64 1.16" fill="none" stroke="#8c8c8c" stroke-width="1.200"/></svg>
<div class="a" style="left:432px;top:719px;width:82px;height:16px;background:#1f1f1f;border-radius:2px"></div>
<div class="t" style="left:438px;top:721px;color:#a8a8a8;font-size:10.500px;width:63px;overflow:hidden;letter-spacing:-.2px">1. 组 4/735.psd</div>
<svg style="left:503px;top:725px" width="8" height="5" viewBox="0 0 8 5"><path d="M0.7 0.7 L4 4 L7.3 0.7" fill="none" stroke="#9a9a9a" stroke-width="1.3"/></svg>
<div class="a" style="left:14px;top:736px;width:520px;height:2px;background:#242424;"></div>
<div class="a" style="left:16px;top:740px;width:14px;height:11px;background:#1e1e1e;border-radius:2px"></div>
<svg style="left:18px;top:741px" width="12" height="9" viewBox="0 0 12 9"><path d="M0.300 4.500C2.500 0.800 9.500 0.800 11.700 4.500 9.500 8.200 2.500 8.200 0.300 4.500z" fill="#d0d0d0"/><circle cx="6" cy="4.500" r="1.900" fill="#1e1e1e"/></svg>
<div class="a" style="left:44px;top:740px;width:12px;height:11px;background:#222222;"></div>
<div class="a" style="left:59px;top:740px;width:12px;height:11px;background:#222222;"></div>
<svg style="left:82px;top:741px" width="5" height="9" viewBox="0 0 5 9"><path d="M0.7 0.7 L4 4.5 L0.7 8.3" fill="none" stroke="#7a7a7a" stroke-width="1.3"/></svg>
<div class="a" style="left:91px;top:736px;width:16px;height:19px;background:#24263a;"></div>
<div class="a" style="left:92px;top:739px;width:14px;height:14px;background:#b2b0dc;"></div>
<div class="t mono" style="left:112px;top:740px;color:#a8a8a8"><span class="ml">6</span></div>
<svg style="left:140px;top:738px" width="11" height="15" viewBox="0 0 11 15"><path d="M0.500 0.500h7l3 3v11h-10z" fill="#0c3a78" stroke="#2d80dc" stroke-width="1"/><path d="M7.500 0.500v3h3" fill="none" stroke="#2d80dc" stroke-width=".8"/></svg>
<div class="t" style="left:142px;top:739px;color:#7ab8ff;font-size:6px;font-weight:bold;line-height:7px;height:7px;letter-spacing:-.3px">Ps</div>
<div class="a" style="left:143px;top:748px;width:5px;height:2px;background:#c8d8f0;"></div>
<div class="t mono" style="left:159px;top:740px;color:#9c9c9c"><span class="mc">组</span><span class="ml"> 1 </span><span class="mc">拷贝</span><span class="ml"> ...psd</span></div>
<div class="a" style="left:261px;top:738px;width:62px;height:16px;background:#1f1f1f;border-radius:2px"></div>
<div class="t " style="left:266px;top:739px;color:#c0c0c0;font-size:11px">正常</div>
<svg style="left:312px;top:743px" width="8" height="5" viewBox="0 0 8 5"><path d="M0.7 0.7 L4 4 L7.3 0.7" fill="none" stroke="#9a9a9a" stroke-width="1.3"/></svg>
<div class="a" style="left:328px;top:739px;width:12px;height:13px;background:#232323;"></div>
<div class="a" style="left:346px;top:738px;width:60px;height:16px;background:#1f1f1f;border-radius:2px"></div>
<div class="t " style="left:352px;top:739px;color:#c0c0c0;font-size:11px">无</div>
<svg style="left:394px;top:743px" width="8" height="5" viewBox="0 0 8 5"><path d="M0.7 0.7 L4 4 L7.3 0.7" fill="none" stroke="#9a9a9a" stroke-width="1.3"/></svg>
<svg style="left:415px;top:739px" width="12" height="12" viewBox="0 0 12 12"><path d="M6.73 6.73 L6.67 6.90 L6.58 7.07 L6.44 7.23 L6.27 7.36 L6.07 7.46 L5.83 7.53 L5.58 7.55 L5.31 7.52 L5.04 7.43 L4.79 7.29 L4.55 7.10 L4.34 6.86 L4.18 6.57 L4.07 6.24 L4.02 5.89 L4.04 5.52 L4.13 5.15 L4.29 4.78 L4.52 4.45 L4.82 4.15 L5.17 3.90 L5.58 3.72 L6.03 3.61 L6.50 3.59 L6.98 3.65 L7.45 3.80 L7.90 4.04 L8.31 4.37 L8.67 4.77 L8.95 5.24 L9.14 5.77 L9.24 6.34 L9.24 6.92 L9.13 7.51 L8.91 8.09 L8.58 8.62 L8.15 9.10 L7.64 9.50 L7.05 9.81 L6.40 10.01 L5.71 10.10 L5.01 10.05 L4.31 9.89 L3.64 9.59 L3.03 9.17 L2.49 8.64 L2.05 8.01 L1.72 7.30 L1.52 6.53 L1.46 5.72 L1.54 4.91 L1.78 4.10 L2.16 3.35 L2.67 2.66 L3.31 2.06 L4.06 1.58 L4.89 1.24 L5.78 1.05 L6.71 1.02 L7.64 1.16" fill="none" stroke="#8c8c8c" stroke-width="1.200"/></svg>
<div class="a" style="left:432px;top:738px;width:82px;height:16px;background:#1f1f1f;border-radius:2px"></div>
<div class="t" style="left:438px;top:739px;color:#a8a8a8;font-size:10.500px;width:63px;overflow:hidden;letter-spacing:-.2px">1. 组 4/735.psd</div>
<svg style="left:503px;top:743px" width="8" height="5" viewBox="0 0 8 5"><path d="M0.7 0.7 L4 4 L7.3 0.7" fill="none" stroke="#9a9a9a" stroke-width="1.3"/></svg>
<div class="a" style="left:533px;top:626px;width:1px;height:196px;background:#0e0e0e;"></div>
<div class="a" style="left:534px;top:596px;width:6px;height:226px;background:#232323;"></div>
<div class="a" style="left:520px;top:645px;width:13px;height:111px;background:#2a2a2a;"></div>
<div class="a" style="left:540px;top:596px;width:1058px;height:3px;background:#1c1c1c;"></div>
<div class="a" style="left:542px;top:599px;width:1056px;height:7px;background:#686868;"></div>
<div class="a" style="left:535px;top:599px;width:7px;height:7px;background:#2d8cf0;border-radius:4px 0 0 4px"></div>
<div class="a" style="left:540px;top:606px;width:1058px;height:20px;background:#212121;"></div>
<div class="a" style="left:542px;top:626px;width:1056px;height:14px;background:linear-gradient(#6c6666,#686464 55%,#5c615e);"></div>
<div class="a" style="left:535px;top:626px;width:7px;height:14px;background:#2d8cf0;border-radius:4px 0 0 4px"></div>
<div class="a" style="left:542px;top:639px;width:1056px;height:1px;background:#2c5a38;"></div>
<div class="a" style="left:542px;top:640px;width:1056px;height:3px;background:#2a9c46;"></div>
<div class="a" style="left:542px;top:643px;width:1056px;height:2px;background:#0e3a18;"></div>
<div class="a" style="left:542px;top:645px;width:1056px;height:109px;background:#383c48;"></div>
<div class="a" style="left:542px;top:754px;width:1056px;height:68px;background:#2f2f2f;"></div>
<div class="a" style="left:542px;top:646px;width:1056px;height:15px;background:#767b8c;"></div>
<div class="a" style="left:542px;top:661px;width:1056px;height:1px;background:#596070;"></div>
<div class="a" style="left:542px;top:664px;width:1056px;height:15px;background:#767b8c;"></div>
<div class="a" style="left:542px;top:679px;width:1056px;height:1px;background:#596070;"></div>
<div class="a" style="left:542px;top:683px;width:1056px;height:15px;background:#767b8c;"></div>
<div class="a" style="left:542px;top:698px;width:1056px;height:1px;background:#596070;"></div>
<div class="a" style="left:542px;top:701px;width:1056px;height:15px;background:#767b8c;"></div>
<div class="a" style="left:542px;top:716px;width:1056px;height:1px;background:#596070;"></div>
<div class="a" style="left:542px;top:720px;width:1056px;height:15px;background:#767b8c;"></div>
<div class="a" style="left:542px;top:735px;width:1056px;height:1px;background:#596070;"></div>
<div class="a" style="left:542px;top:738px;width:1056px;height:15px;background:#767b8c;"></div>
<div class="a" style="left:541px;top:620px;width:1px;height:5px;background:#8a8a8a;"></div>
<div class="t" style="left:544px;top:608px;color:#a8a8a8;font-family:'Liberation Mono',monospace;font-size:10px;letter-spacing:-.500px">0f</div>
<div class="a" style="left:588px;top:620px;width:1px;height:5px;background:#8a8a8a;"></div>
<div class="t" style="left:566.8px;top:608px;width:40px;text-align:center;color:#a8a8a8;font-family:'Liberation Mono',monospace;font-size:10px;letter-spacing:-.500px">10f</div>
<div class="a" style="left:635px;top:620px;width:1px;height:5px;background:#8a8a8a;"></div>
<div class="t" style="left:613.7px;top:608px;width:40px;text-align:center;color:#a8a8a8;font-family:'Liberation Mono',monospace;font-size:10px;letter-spacing:-.500px">20f</div>
<div class="a" style="left:681px;top:620px;width:1px;height:5px;background:#8a8a8a;"></div>
<div class="t" style="left:660.7px;top:608px;width:40px;text-align:center;color:#a8a8a8;font-family:'Liberation Mono',monospace;font-size:10px;letter-spacing:-.500px">30f</div>
<div class="a" style="left:728px;top:620px;width:1px;height:5px;background:#8a8a8a;"></div>
<div class="t" style="left:707.6px;top:608px;width:40px;text-align:center;color:#a8a8a8;font-family:'Liberation Mono',monospace;font-size:10px;letter-spacing:-.500px">40f</div>
<div class="a" style="left:775px;top:615px;width:1px;height:10px;background:#8a8a8a;"></div>
<div class="t" style="left:754.6px;top:608px;width:40px;text-align:center;color:#a8a8a8;font-family:'Liberation Mono',monospace;font-size:10px;letter-spacing:-.500px">01:00f</div>
<div class="a" style="left:822px;top:620px;width:1px;height:5px;background:#8a8a8a;"></div>
<div class="t" style="left:801.6px;top:608px;width:40px;text-align:center;color:#a8a8a8;font-family:'Liberation Mono',monospace;font-size:10px;letter-spacing:-.500px">10f</div>
<div class="a" style="left:869px;top:620px;width:1px;height:5px;background:#8a8a8a;"></div>
<div class="t" style="left:848.5px;top:608px;width:40px;text-align:center;color:#a8a8a8;font-family:'Liberation Mono',monospace;font-size:10px;letter-spacing:-.500px">20f</div>
<div class="a" style="left:916px;top:620px;width:1px;height:5px;background:#8a8a8a;"></div>
<div class="t" style="left:895.5px;top:608px;width:40px;text-align:center;color:#a8a8a8;font-family:'Liberation Mono',monospace;font-size:10px;letter-spacing:-.500px">30f</div>
<div class="a" style="left:963px;top:620px;width:1px;height:5px;background:#8a8a8a;"></div>
<div class="t" style="left:942.4px;top:608px;width:40px;text-align:center;color:#a8a8a8;font-family:'Liberation Mono',monospace;font-size:10px;letter-spacing:-.500px">40f</div>
<div class="a" style="left:1010px;top:615px;width:1px;height:10px;background:#8a8a8a;"></div>
<div class="t" style="left:989.4px;top:608px;width:40px;text-align:center;color:#a8a8a8;font-family:'Liberation Mono',monospace;font-size:10px;letter-spacing:-.500px">02:00f</div>
<div class="a" style="left:1057px;top:620px;width:1px;height:5px;background:#8a8a8a;"></div>
<div class="t" style="left:1036.4px;top:608px;width:40px;text-align:center;color:#a8a8a8;font-family:'Liberation Mono',monospace;font-size:10px;letter-spacing:-.500px">10f</div>
<div class="a" style="left:1104px;top:620px;width:1px;height:5px;background:#8a8a8a;"></div>
<div class="t" style="left:1083.3px;top:608px;width:40px;text-align:center;color:#a8a8a8;font-family:'Liberation Mono',monospace;font-size:10px;letter-spacing:-.500px">20f</div>
<div class="a" style="left:1151px;top:620px;width:1px;height:5px;background:#8a8a8a;"></div>
<div class="t" style="left:1130.3px;top:608px;width:40px;text-align:center;color:#a8a8a8;font-family:'Liberation Mono',monospace;font-size:10px;letter-spacing:-.500px">30f</div>
<div class="a" style="left:1198px;top:620px;width:1px;height:5px;background:#8a8a8a;"></div>
<div class="t" style="left:1177.2px;top:608px;width:40px;text-align:center;color:#a8a8a8;font-family:'Liberation Mono',monospace;font-size:10px;letter-spacing:-.500px">40f</div>
<div class="a" style="left:1245px;top:615px;width:1px;height:10px;background:#8a8a8a;"></div>
<div class="t" style="left:1224.2px;top:608px;width:40px;text-align:center;color:#a8a8a8;font-family:'Liberation Mono',monospace;font-size:10px;letter-spacing:-.500px">03:00f</div>
<div class="a" style="left:1292px;top:620px;width:1px;height:5px;background:#8a8a8a;"></div>
<div class="t" style="left:1271.2px;top:608px;width:40px;text-align:center;color:#a8a8a8;font-family:'Liberation Mono',monospace;font-size:10px;letter-spacing:-.500px">10f</div>
<div class="a" style="left:1339px;top:620px;width:1px;height:5px;background:#8a8a8a;"></div>
<div class="t" style="left:1318.1px;top:608px;width:40px;text-align:center;color:#a8a8a8;font-family:'Liberation Mono',monospace;font-size:10px;letter-spacing:-.500px">20f</div>
<div class="a" style="left:1386px;top:620px;width:1px;height:5px;background:#8a8a8a;"></div>
<div class="t" style="left:1365.1px;top:608px;width:40px;text-align:center;color:#a8a8a8;font-family:'Liberation Mono',monospace;font-size:10px;letter-spacing:-.500px">30f</div>
<div class="a" style="left:1433px;top:620px;width:1px;height:5px;background:#8a8a8a;"></div>
<div class="t" style="left:1412.0px;top:608px;width:40px;text-align:center;color:#a8a8a8;font-family:'Liberation Mono',monospace;font-size:10px;letter-spacing:-.500px">40f</div>
<div class="a" style="left:1480px;top:615px;width:1px;height:10px;background:#8a8a8a;"></div>
<div class="t" style="left:1459.0px;top:608px;width:40px;text-align:center;color:#a8a8a8;font-family:'Liberation Mono',monospace;font-size:10px;letter-spacing:-.500px">04:00f</div>
<div class="a" style="left:1527px;top:620px;width:1px;height:5px;background:#8a8a8a;"></div>
<div class="t" style="left:1506.0px;top:608px;width:40px;text-align:center;color:#a8a8a8;font-family:'Liberation Mono',monospace;font-size:10px;letter-spacing:-.500px">10f</div>
<div class="a" style="left:1574px;top:620px;width:1px;height:5px;background:#8a8a8a;"></div>
<div class="t" style="left:1552.9px;top:608px;width:40px;text-align:center;color:#a8a8a8;font-family:'Liberation Mono',monospace;font-size:10px;letter-spacing:-.500px">20f</div>
<div class="a" style="left:539px;top:645px;width:1px;height:177px;background:#1c3a60;"></div>
<div class="a" style="left:540px;top:626px;width:1px;height:196px;background:#2f62a0;"></div>
<div class="a" style="left:541px;top:620px;width:1px;height:202px;background:#5a94d4;"></div>
<svg style="left:536px;top:612px" width="11" height="12" viewBox="0 0 11 12"><path d="M0.300 0.300h10.400v5L5.500 11.700 0.300 5.300z" fill="#3a94f4"/></svg>
<div class="a" style="left:1595px;top:727px;width:3px;height:14px;background:#e4e4e8;"></div>
<svg style="left:1590px;top:775px" width="8" height="12" viewBox="0 0 8 12"><path d="M7.500 0v8.500a2.500 2 0 0 1-5 0" fill="none" stroke="#e8e8e8" stroke-width="1.800"/></svg>
<div class="a" style="left:1394px;top:176px;width:189px;height:21px;background:#ffffff;box-shadow:0 0 2px rgba(0,0,0,.35);overflow:hidden">
<div class="t" style="left:30px;top:2.0px;height:16px;line-height:16px;color:#1a6cc8;font-size:14px;font-weight:bold">英</div>
<svg style="left:50px;top:4.5px" width="13" height="13" viewBox="0 0 13 13"><circle cx="2.500" cy="2.800" r="1.600" fill="none" stroke="#1a6cc8" stroke-width="1.200"/><path d="M7.500 6.500a1.700 1.700 0 1 1 2.800 1.300c0 1.700-.8 2.800-2.300 3.500.7-.9 1-1.700.9-2.600a1.700 1.700 0 0 1-1.400-2.200z" fill="#1a6cc8"/></svg>
<svg style="left:68px;top:2.0px" width="17" height="17" viewBox="0 0 17 17"><circle cx="8.500" cy="8.500" r="7.300" fill="none" stroke="#1a6cc8" stroke-width="1.500"/><circle cx="5.800" cy="6.500" r="1.100" fill="#1a6cc8"/><circle cx="11.200" cy="6.500" r="1.100" fill="#1a6cc8"/><path d="M4.800 10.200a4 4 0 0 0 7.400 0" fill="none" stroke="#1a6cc8" stroke-width="1.300"/></svg>
<svg style="left:92px;top:2.0px" width="13" height="17" viewBox="0 0 13 17"><rect x="3.800" y="0" width="5.400" height="10" rx="2.700" fill="#1a6cc8"/><path d="M1 7a5.500 5.500 0 0 0 11 0" fill="none" stroke="#1a6cc8" stroke-width="1.400"/><path d="M6.500 12.500V15.500M3.500 16h6" stroke="#1a6cc8" stroke-width="1.500"/></svg>
<svg style="left:109px;top:4.5px" width="17" height="12" viewBox="0 0 17 12"><rect x="0" y="0" width="17" height="12" rx="1.500" fill="#1a6cc8"/><path d="M2 2.500h1.800M5 2.500h1.800M8 2.500h1.800M11 2.500h1.800M14 2.500h1.200M2 5.200h1.800M5 5.200h1.800M8 5.200h1.800M11 5.200h1.800M14 5.200h1.200" stroke="#fff" stroke-width="1.500"/><path d="M3.500 8.800h10" stroke="#fff" stroke-width="1.700"/></svg>
<svg style="left:131px;top:2.5px" width="17" height="16" viewBox="0 0 17 16"><circle cx="6" cy="3.500" r="3" fill="#b8c0cc"/><path d="M0.500 13c0-4 2.500-6 5.500-6s5.500 2 5.500 6z" fill="#b8c0cc"/><rect x="7" y="9" width="10" height="6.500" rx="1" fill="#fff" stroke="#a8b0bc" stroke-width="1"/></svg>
<div class="t" style="left:132px;top:11.5px;width:17px;text-align:right;height:6px;line-height:6px;color:#9098a8;font-size:6px;font-weight:bold">12</div>
<svg style="left:153px;top:4.0px" width="10" height="13" viewBox="0 0 10 13"><path d="M0 1.500L3 0h4l3 1.500V13H0z" fill="#1a6cc8"/></svg>
<svg style="left:171px;top:4.5px" width="13" height="12" viewBox="0 0 13 12"><rect x="0" y="0" width="5.700" height="5.200" fill="#1a6cc8"/><rect x="7.300" y="0" width="5.700" height="5.200" fill="#1a6cc8"/><rect x="0" y="6.800" width="5.700" height="5.200" fill="#1a6cc8"/><rect x="7.300" y="6.800" width="5.700" height="5.200" fill="#1a6cc8"/></svg>
</div>
<div class="a" style="left:1394px;top:174px;width:22px;height:22px;background:linear-gradient(160deg,#f47a30,#e8501c);border-radius:5px;transform:rotate(-14deg);box-shadow:0 0 2px rgba(0,0,0,.3)"></div>
<div class="t" style="left:1394px;top:173px;width:22px;height:22px;line-height:22px;text-align:center;color:#fff;font-size:23px;font-weight:bold;font-style:italic;transform:rotate(-14deg)">S</div>
<div class="a" style="left:1436px;top:163px;width:170px;height:22px;background:#ffffff;box-shadow:0 0 2px rgba(0,0,0,.35);overflow:hidden">
<div class="t" style="left:30px;top:2.5px;height:16px;line-height:16px;color:#1a6cc8;font-size:14px;font-weight:bold">中</div>
<svg style="left:52px;top:5.0px" width="13" height="13" viewBox="0 0 13 13"><circle cx="2.500" cy="2.800" r="1.600" fill="none" stroke="#1a6cc8" stroke-width="1.200"/><path d="M7.500 6.500a1.700 1.700 0 1 1 2.800 1.300c0 1.700-.8 2.800-2.300 3.500.7-.9 1-1.700.9-2.600a1.700 1.700 0 0 1-1.400-2.200z" fill="#1a6cc8"/></svg>
<svg style="left:72.5px;top:2.5px" width="17" height="17" viewBox="0 0 17 17"><circle cx="8.500" cy="8.500" r="7.300" fill="none" stroke="#1a6cc8" stroke-width="1.500"/><circle cx="5.800" cy="6.500" r="1.100" fill="#1a6cc8"/><circle cx="11.200" cy="6.500" r="1.100" fill="#1a6cc8"/><path d="M4.800 10.200a4 4 0 0 0 7.400 0" fill="none" stroke="#1a6cc8" stroke-width="1.300"/></svg>
<svg style="left:96.5px;top:2.5px" width="13" height="17" viewBox="0 0 13 17"><rect x="3.800" y="0" width="5.400" height="10" rx="2.700" fill="#1a6cc8"/><path d="M1 7a5.500 5.500 0 0 0 11 0" fill="none" stroke="#1a6cc8" stroke-width="1.400"/><path d="M6.500 12.500V15.500M3.500 16h6" stroke="#1a6cc8" stroke-width="1.500"/></svg>
<svg style="left:117px;top:5.0px" width="17" height="12" viewBox="0 0 17 12"><rect x="0" y="0" width="17" height="12" rx="1.500" fill="#1a6cc8"/><path d="M2 2.500h1.800M5 2.500h1.800M8 2.500h1.800M11 2.500h1.800M14 2.500h1.200M2 5.200h1.800M5 5.200h1.800M8 5.200h1.800M11 5.200h1.800M14 5.200h1.200" stroke="#fff" stroke-width="1.500"/><path d="M3.500 8.800h10" stroke="#fff" stroke-width="1.700"/></svg>
<svg style="left:141px;top:3.0px" width="17" height="16" viewBox="0 0 17 16"><circle cx="6" cy="3.500" r="3" fill="#b8c0cc"/><path d="M0.500 13c0-4 2.500-6 5.500-6s5.500 2 5.500 6z" fill="#b8c0cc"/><rect x="7" y="9" width="10" height="6.500" rx="1" fill="#fff" stroke="#a8b0bc" stroke-width="1"/></svg>
<div class="t" style="left:142px;top:12.0px;width:17px;text-align:right;height:6px;line-height:6px;color:#9098a8;font-size:6px;font-weight:bold">12</div>
</div>
<div class="a" style="left:1435px;top:161px;width:23px;height:23px;background:linear-gradient(160deg,#f47a30,#e8501c);border-radius:5px;transform:rotate(-14deg);box-shadow:0 0 2px rgba(0,0,0,.3)"></div>
<div class="t" style="left:1435px;top:160px;width:23px;height:23px;line-height:23px;text-align:center;color:#fff;font-size:24px;font-weight:bold;font-style:italic;transform:rotate(-14deg)">S</div>
</div>
</body>
</html>
